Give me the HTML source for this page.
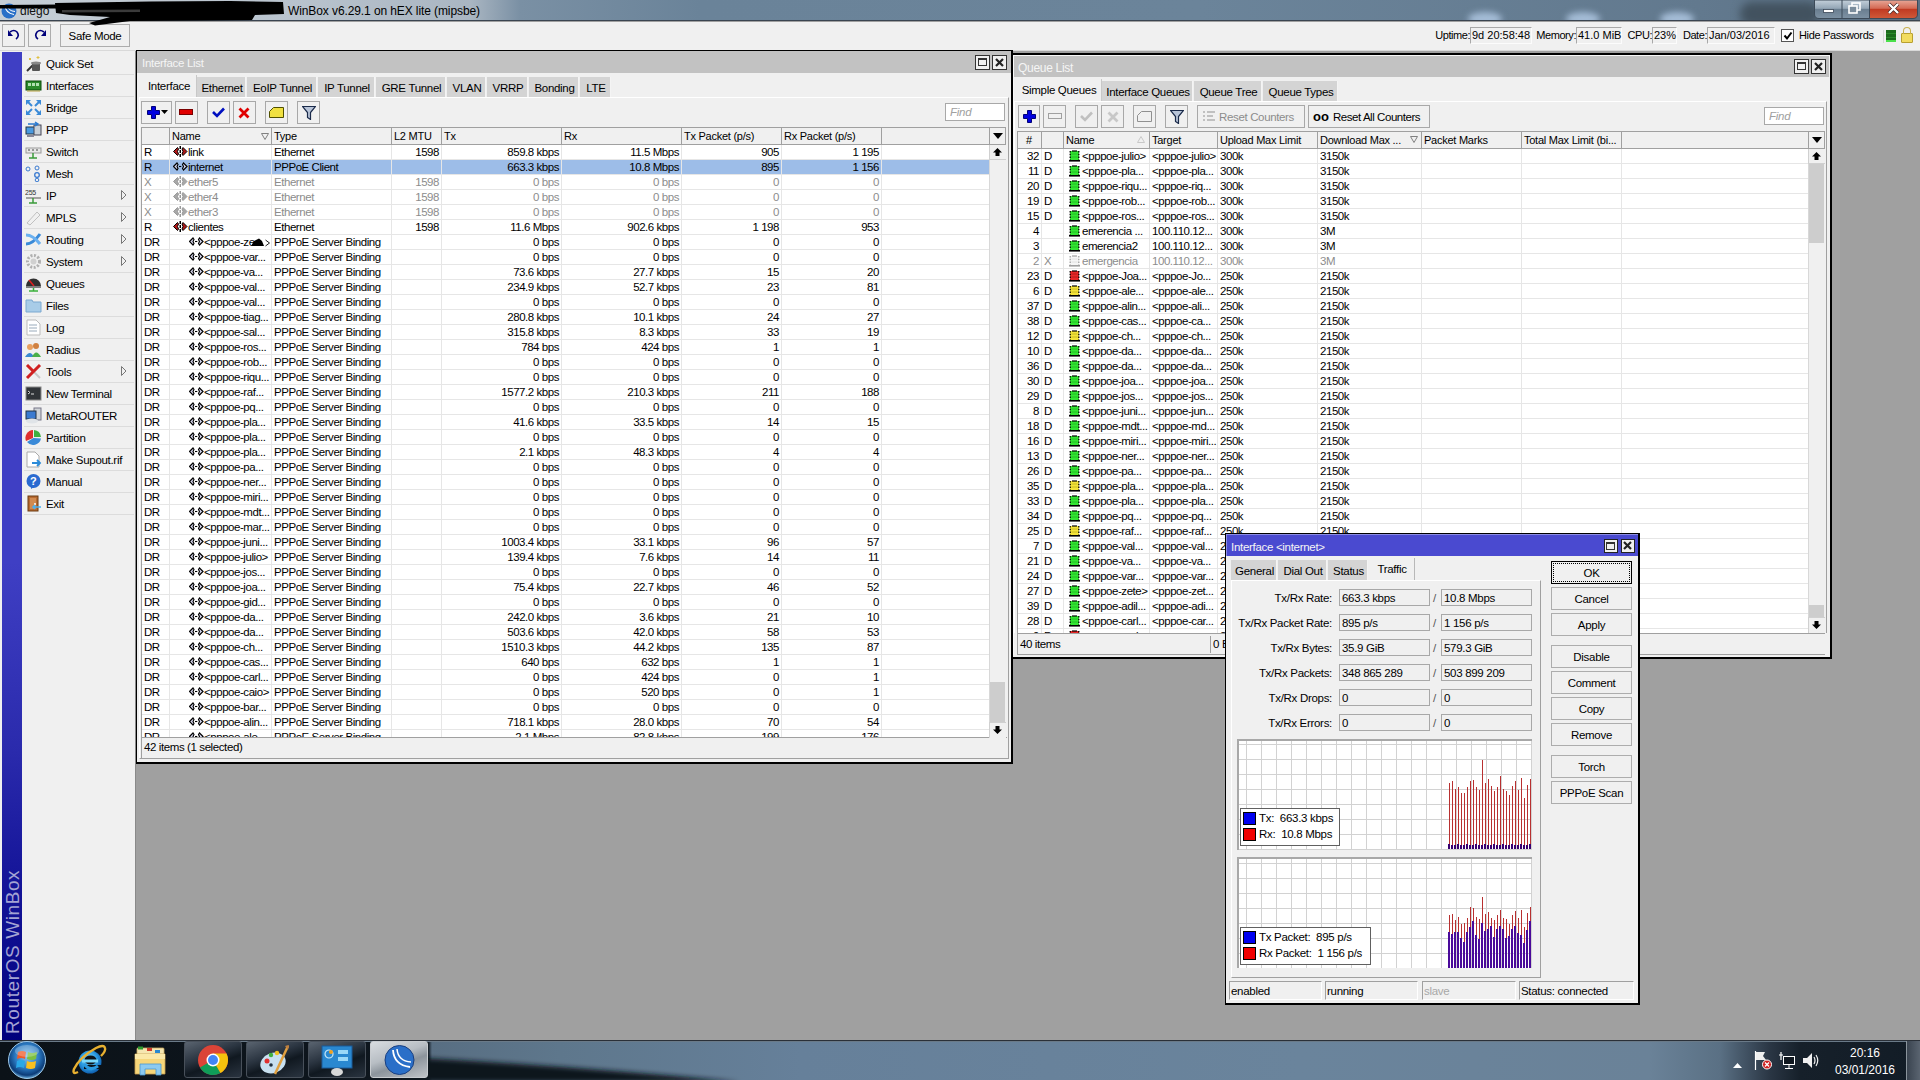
<!DOCTYPE html><html><head><meta charset="utf-8"><style>
*{box-sizing:border-box}
html,body{margin:0;padding:0;width:1920px;height:1080px;overflow:hidden;background:#a0a0a0}
body{position:relative;font-family:"Liberation Sans",sans-serif;font-size:11px;color:#000;letter-spacing:-0.25px}
div{position:absolute}
.t{white-space:pre;line-height:15px;height:15px}
.r{text-align:right}
.btn{background:#f0f0f0;border:1px solid #adadad}
.g{color:#8c8c8c}
.tb .t{font-size:11.5px;letter-spacing:-0.45px}
</style></head><body>
<div style="left:0px;top:0px;width:1920px;height:21px;background:linear-gradient(90deg,#c6ced6 0px,#bcc6d0 250px,#aab6c2 470px,#7a90a4 520px,#6a8399 700px,#6b849a 1200px,#62798e 1700px,#5a7084 1920px)"></div>
<div style="position:absolute;left:0;top:0;width:1920px;height:20px;overflow:hidden"><div style="position:absolute;left:1468px;top:12px;width:34px;height:14px;border-radius:50%;background:#a4bcd6;filter:blur(3px)"></div><div style="position:absolute;left:1566px;top:12px;width:34px;height:14px;border-radius:50%;background:#a4bcd6;filter:blur(3px)"></div><div style="position:absolute;left:1660px;top:12px;width:34px;height:14px;border-radius:50%;background:#a4bcd6;filter:blur(3px)"></div><div style="position:absolute;left:1740px;top:2px;width:80px;height:24px;border-radius:12px;background:#42525f;filter:blur(4px)"></div></div>
<div style="left:0px;top:20px;width:1920px;height:1px;background:#3a4450"></div>
<svg style="position:absolute;left:1px;top:3px" width="16" height="16"><circle cx="8" cy="8" r="7.5" fill="#2a70c8"/><path d="M4 2.5 Q4.5 10 13 11.5" fill="none" stroke="#fff" stroke-width="1.2"/><path d="M6.5 2 Q7 8 14 8.5" fill="none" stroke="#fff" stroke-width="1"/></svg>
<div class="t" style="left:20px;top:4px;font-size:12px;color:#111;letter-spacing:0">diego</div>
<svg style="position:absolute;left:1813px;top:0" width="106" height="20"><defs><linearGradient id="cb" x1="0" y1="0" x2="0" y2="1"><stop offset="0" stop-color="#c4d0da"/><stop offset="0.45" stop-color="#94a6b6"/><stop offset="0.5" stop-color="#6a7e90"/><stop offset="1" stop-color="#7e92a4"/></linearGradient><linearGradient id="cr" x1="0" y1="0" x2="0" y2="1"><stop offset="0" stop-color="#e8a898"/><stop offset="0.45" stop-color="#d46a54"/><stop offset="0.5" stop-color="#c03a22"/><stop offset="1" stop-color="#d05a3a"/></linearGradient></defs><path d="M1.5 0 V14 Q1.5 18.5 6 18.5 H56.5 V0 Z" fill="url(#cb)" stroke="#3c4a58"/><path d="M29 0 V18.5" stroke="#3c4a58"/><path d="M56.5 0 V18.5 H100 Q104.5 18.5 104.5 14 V0 Z" fill="url(#cr)" stroke="#3c4a58"/><rect x="10.5" y="9.5" width="10" height="3" fill="#fff" stroke="#3a4656" stroke-width="0.8"/><rect x="39" y="3" width="8" height="7" fill="none" stroke="#fff" stroke-width="1.6"/><rect x="36" y="6" width="8" height="7" fill="#7a8c9c" stroke="#fff" stroke-width="1.6"/><path d="M76 4 L85 13 M85 4 L76 13" stroke="#3a2020" stroke-width="3.6"/><path d="M76 4 L85 13 M85 4 L76 13" stroke="#fff" stroke-width="2.4"/></svg>
<div style="left:0px;top:22px;width:1920px;height:29px;background:#f0f0f0"></div>
<div style="left:0px;top:50px;width:1920px;height:1px;background:#d9d9d9"></div>
<div class="btn" style="left:2px;top:24px;width:23px;height:23px;"></div>
<div class="btn" style="left:28px;top:24px;width:23px;height:23px;"></div>
<svg style="position:absolute;left:7;top:29px;left:7px" width="14" height="12"><path d="M3 3 Q7 0 10 3 Q13 7 9 10" stroke="#00007a" stroke-width="1.6" fill="none"/><path d="M1 1 L1 7 L6 7 Z" fill="#00007a"/></svg>
<svg style="position:absolute;top:29px;left:33px" width="14" height="12"><path d="M11 3 Q7 0 4 3 Q1 7 5 10" stroke="#00007a" stroke-width="1.6" fill="none"/><path d="M13 1 L13 7 L8 7 Z" fill="#00007a"/></svg>
<div class="btn" style="left:60px;top:24px;width:70px;height:23px;"></div>
<div class="t" style="left:60px;top:29px;width:70px;text-align:center;font-size:11.5px;letter-spacing:-0.3px">Safe Mode</div>
<svg style="position:absolute;left:0;top:0" width="300" height="30"><path d="M0 5 L60 4.5 L60 8.5 L0 8.5 Z" fill="#000"/><path d="M55 3 L150 1.5 L230 1 L283 2 L284 14 L255 15 L252 20 L200 20.5 L130 21 L95 25.5 L89 23 L110 17 L70 15 L56 13 Z" fill="#000"/><path d="M62 10 L140 9.5 L140 12 L62 12.5 Z" fill="#3a3a3a"/></svg>
<div class="t" style="left:279px;top:4px;font-size:12px;color:#000;letter-spacing:0">-</div>
<div class="t" style="left:288px;top:4px;font-size:12px;color:#000;letter-spacing:-0.1px">WinBox v6.29.1 on hEX lite (mipsbe)</div>
<div class="t" style="left:1390px;top:28px;width:80px;text-align:right;line-height:15px;font-size:11px;letter-spacing:-0.45px">Uptime:</div>
<div style="left:1470px;top:27px;width:62px;height:17px;background:#f0f0f0;border-left:1px solid #a8a8a8;border-top:1px solid #a8a8a8;border-right:1px solid #fcfcfc;border-bottom:1px solid #fcfcfc"></div>
<div class="t" style="left:1472px;top:28px;line-height:15px;font-size:11px;letter-spacing:0px">9d 20:58:48</div>
<div class="t" style="left:1496px;top:28px;width:80px;text-align:right;line-height:15px;font-size:11px;letter-spacing:-0.45px">Memory:</div>
<div style="left:1576px;top:27px;width:46px;height:17px;background:#f0f0f0;border-left:1px solid #a8a8a8;border-top:1px solid #a8a8a8;border-right:1px solid #fcfcfc;border-bottom:1px solid #fcfcfc"></div>
<div class="t" style="left:1578px;top:28px;line-height:15px;font-size:11px;letter-spacing:0px">41.0 MiB</div>
<div class="t" style="left:1572px;top:28px;width:80px;text-align:right;line-height:15px;font-size:11px;letter-spacing:-0.45px">CPU:</div>
<div style="left:1652px;top:27px;width:25px;height:17px;background:#f0f0f0;border-left:1px solid #a8a8a8;border-top:1px solid #a8a8a8;border-right:1px solid #fcfcfc;border-bottom:1px solid #fcfcfc"></div>
<div class="t" style="left:1654px;top:28px;line-height:15px;font-size:11px;letter-spacing:0px">23%</div>
<div class="t" style="left:1627px;top:28px;width:80px;text-align:right;line-height:15px;font-size:11px;letter-spacing:-0.45px">Date:</div>
<div style="left:1707px;top:27px;width:68px;height:17px;background:#f0f0f0;border-left:1px solid #a8a8a8;border-top:1px solid #a8a8a8;border-right:1px solid #fcfcfc;border-bottom:1px solid #fcfcfc"></div>
<div class="t" style="left:1709px;top:28px;line-height:15px;font-size:11px;letter-spacing:0px">Jan/03/2016</div>
<div style="left:1781px;top:29px;width:13px;height:13px;background:#fff;border:1px solid #555"></div>
<svg style="position:absolute;left:1782px;top:30px" width="12" height="12"><path d="M2.5 5.5 L5 8.5 L9.5 2.5" stroke="#000" stroke-width="2" fill="none"/></svg>
<div class="t" style="left:1799px;top:28px;line-height:15px;font-size:11px;letter-spacing:-0.35px">Hide Passwords</div>
<div style="left:1883px;top:30px;width:1px;height:13px;background:#d8d8d8"></div>
<div style="left:1886px;top:30px;width:10px;height:12px;background:repeating-linear-gradient(#1c6a1c 0 3px,#2a8a2a 3px 4px);border-bottom:2px solid #4be04b"></div>
<div style="left:1901px;top:33px;width:12px;height:10px;background:#f2dc60;border:1px solid #b8a030;border-radius:1px"></div>
<div style="left:1903px;top:27px;width:8px;height:7px;border:1.5px solid #c8b050;border-bottom:none;border-radius:4px 4px 0 0"></div>
<div style="left:0px;top:51px;width:136px;height:989px;background:#f0f0f0"></div>
<div style="left:2px;top:52px;width:20px;height:988px;background:linear-gradient(#3f3fc4 0px,#3f3fc4 510px,#2a2aac 700px,#16169a 820px,#0a0a8a 920px,#00007c 988px)"></div>
<div style="position:absolute;left:3px;top:1034px;width:200px;height:19px;transform:rotate(-90deg);transform-origin:0 0;color:#a4a4d4;font-size:19px;letter-spacing:0.6px;white-space:pre;line-height:19px">RouterOS WinBox</div>
<div style="left:135px;top:51px;width:1px;height:989px;background:#8a8a8a"></div>
<div style="left:24px;top:74px;width:110px;height:1px;background:#dcdcdc"></div>
<div class="t" style="left:46px;top:57px;font-size:11.5px;line-height:15px;letter-spacing:-0.3px">Quick Set</div>
<div style="left:24px;top:96px;width:110px;height:1px;background:#dcdcdc"></div>
<div class="t" style="left:46px;top:79px;font-size:11.5px;line-height:15px;letter-spacing:-0.3px">Interfaces</div>
<div style="left:24px;top:118px;width:110px;height:1px;background:#dcdcdc"></div>
<div class="t" style="left:46px;top:101px;font-size:11.5px;line-height:15px;letter-spacing:-0.3px">Bridge</div>
<div style="left:24px;top:140px;width:110px;height:1px;background:#dcdcdc"></div>
<div class="t" style="left:46px;top:123px;font-size:11.5px;line-height:15px;letter-spacing:-0.3px">PPP</div>
<div style="left:24px;top:162px;width:110px;height:1px;background:#dcdcdc"></div>
<div class="t" style="left:46px;top:145px;font-size:11.5px;line-height:15px;letter-spacing:-0.3px">Switch</div>
<div style="left:24px;top:184px;width:110px;height:1px;background:#dcdcdc"></div>
<div class="t" style="left:46px;top:167px;font-size:11.5px;line-height:15px;letter-spacing:-0.3px">Mesh</div>
<div style="left:24px;top:206px;width:110px;height:1px;background:#dcdcdc"></div>
<div class="t" style="left:46px;top:189px;font-size:11.5px;line-height:15px;letter-spacing:-0.3px">IP</div>
<svg style="position:absolute;left:121px;top:190px" width="6" height="10"><path d="M0.5 0.5 L0.5 9.5 L5 5 Z" fill="none" stroke="#777"/></svg>
<div style="left:24px;top:228px;width:110px;height:1px;background:#dcdcdc"></div>
<div class="t" style="left:46px;top:211px;font-size:11.5px;line-height:15px;letter-spacing:-0.3px">MPLS</div>
<svg style="position:absolute;left:121px;top:212px" width="6" height="10"><path d="M0.5 0.5 L0.5 9.5 L5 5 Z" fill="none" stroke="#777"/></svg>
<div style="left:24px;top:250px;width:110px;height:1px;background:#dcdcdc"></div>
<div class="t" style="left:46px;top:233px;font-size:11.5px;line-height:15px;letter-spacing:-0.3px">Routing</div>
<svg style="position:absolute;left:121px;top:234px" width="6" height="10"><path d="M0.5 0.5 L0.5 9.5 L5 5 Z" fill="none" stroke="#777"/></svg>
<div style="left:24px;top:272px;width:110px;height:1px;background:#dcdcdc"></div>
<div class="t" style="left:46px;top:255px;font-size:11.5px;line-height:15px;letter-spacing:-0.3px">System</div>
<svg style="position:absolute;left:121px;top:256px" width="6" height="10"><path d="M0.5 0.5 L0.5 9.5 L5 5 Z" fill="none" stroke="#777"/></svg>
<div style="left:24px;top:294px;width:110px;height:1px;background:#dcdcdc"></div>
<div class="t" style="left:46px;top:277px;font-size:11.5px;line-height:15px;letter-spacing:-0.3px">Queues</div>
<div style="left:24px;top:316px;width:110px;height:1px;background:#dcdcdc"></div>
<div class="t" style="left:46px;top:299px;font-size:11.5px;line-height:15px;letter-spacing:-0.3px">Files</div>
<div style="left:24px;top:338px;width:110px;height:1px;background:#dcdcdc"></div>
<div class="t" style="left:46px;top:321px;font-size:11.5px;line-height:15px;letter-spacing:-0.3px">Log</div>
<div style="left:24px;top:360px;width:110px;height:1px;background:#dcdcdc"></div>
<div class="t" style="left:46px;top:343px;font-size:11.5px;line-height:15px;letter-spacing:-0.3px">Radius</div>
<div style="left:24px;top:382px;width:110px;height:1px;background:#dcdcdc"></div>
<div class="t" style="left:46px;top:365px;font-size:11.5px;line-height:15px;letter-spacing:-0.3px">Tools</div>
<svg style="position:absolute;left:121px;top:366px" width="6" height="10"><path d="M0.5 0.5 L0.5 9.5 L5 5 Z" fill="none" stroke="#777"/></svg>
<div style="left:24px;top:404px;width:110px;height:1px;background:#dcdcdc"></div>
<div class="t" style="left:46px;top:387px;font-size:11.5px;line-height:15px;letter-spacing:-0.3px">New Terminal</div>
<div style="left:24px;top:426px;width:110px;height:1px;background:#dcdcdc"></div>
<div class="t" style="left:46px;top:409px;font-size:11.5px;line-height:15px;letter-spacing:-0.3px">MetaROUTER</div>
<div style="left:24px;top:448px;width:110px;height:1px;background:#dcdcdc"></div>
<div class="t" style="left:46px;top:431px;font-size:11.5px;line-height:15px;letter-spacing:-0.3px">Partition</div>
<div style="left:24px;top:470px;width:110px;height:1px;background:#dcdcdc"></div>
<div class="t" style="left:46px;top:453px;font-size:11.5px;line-height:15px;letter-spacing:-0.3px">Make Supout.rif</div>
<div style="left:24px;top:492px;width:110px;height:1px;background:#dcdcdc"></div>
<div class="t" style="left:46px;top:475px;font-size:11.5px;line-height:15px;letter-spacing:-0.3px">Manual</div>
<div style="left:24px;top:514px;width:110px;height:1px;background:#dcdcdc"></div>
<div class="t" style="left:46px;top:497px;font-size:11.5px;line-height:15px;letter-spacing:-0.3px">Exit</div>
<svg style="position:absolute;left:25px;top:55px" width="17" height="17"><path d="M2 16 L10 8" stroke="#333" stroke-width="2"/><rect x="7" y="8" width="8" height="8" rx="1" fill="#555"/><ellipse cx="11" cy="8" rx="5" ry="1.5" fill="#888"/><path d="M4 3 L6 5 M6 3 L4 5 M13 1 L13 4 M11.5 2.5 H14.5" stroke="#e0c040" stroke-width="1"/></svg>
<svg style="position:absolute;left:25px;top:77px" width="17" height="17"><rect x="1" y="4" width="15" height="9" fill="#2a8a2a" stroke="#0a4a0a"/><rect x="3" y="6" width="3" height="3" fill="#b0e0b0"/><rect x="7" y="6" width="3" height="3" fill="#b0e0b0"/><rect x="11" y="6" width="3" height="3" fill="#b0e0b0"/><path d="M2 14 H15" stroke="#b8a040"/></svg>
<svg style="position:absolute;left:25px;top:99px" width="17" height="17"><path d="M1 1 L6 1 L1 6 Z M16 1 L11 1 L16 6 Z M1 16 L6 16 L1 11 Z M16 16 L11 16 L16 11 Z" fill="#3a8ad8"/><path d="M3 3 L7 7 M14 3 L10 7 M3 14 L7 10 M14 14 L10 10" stroke="#3a8ad8" stroke-width="2"/></svg>
<svg style="position:absolute;left:25px;top:121px" width="17" height="17"><rect x="1" y="6" width="9" height="7" fill="#4a9ae0" stroke="#234"/><rect x="9" y="4" width="7" height="10" fill="#c8d0d8" stroke="#445"/><path d="M3 3 H12 M10 1 L13 3 L10 5" stroke="#2a7ad0" stroke-width="1.5" fill="none"/><rect x="2" y="14" width="7" height="2" fill="#889"/></svg>
<svg style="position:absolute;left:25px;top:143px" width="17" height="17"><rect x="1" y="5" width="15" height="5" fill="#e8e8e8" stroke="#999"/><path d="M3 7 H5 M7 7 H9 M11 7 H13" stroke="#444"/><path d="M8 10 V15 M4 15 H12" stroke="#3a9a3a" stroke-width="1.5"/></svg>
<svg style="position:absolute;left:25px;top:165px" width="17" height="17"><circle cx="3" cy="4" r="2" fill="none" stroke="#3a7ad0"/><circle cx="12" cy="3" r="2" fill="none" stroke="#3a7ad0"/><circle cx="12" cy="10" r="2.3" fill="none" stroke="#3a7ad0" stroke-width="1.3"/><circle cx="12" cy="15" r="1.8" fill="none" stroke="#3a7ad0"/></svg>
<svg style="position:absolute;left:25px;top:187px" width="17" height="17"><text x="0" y="8" font-size="7" font-family="Liberation Sans" fill="#333">255</text><path d="M1 11 H16" stroke="#555"/><path d="M8 11 V16 M4 16 H12" stroke="#3a9a3a" stroke-width="1.5"/></svg>
<svg style="position:absolute;left:25px;top:209px" width="17" height="17"><path d="M2 14 L12 3 L15 6 L5 16 Z" fill="#f0f0f0" stroke="#c0c0c0"/></svg>
<svg style="position:absolute;left:25px;top:231px" width="17" height="17"><path d="M1 13 Q8 13 15 3" stroke="#3a8ad8" stroke-width="3" fill="none"/><path d="M1 4 Q8 4 15 13" stroke="#6ab0f0" stroke-width="3" fill="none"/></svg>
<svg style="position:absolute;left:25px;top:253px" width="17" height="17"><circle cx="8.5" cy="8.5" r="6" fill="none" stroke="#b0b0b0" stroke-width="3" stroke-dasharray="2 1.5"/><circle cx="8.5" cy="8.5" r="3" fill="#d0d0d0"/></svg>
<svg style="position:absolute;left:25px;top:275px" width="17" height="17"><path d="M1 11 A7.5 7.5 0 0 1 16 11 Z" fill="#303030"/><path d="M4 5 L9 11" stroke="#e02020" stroke-width="1.5"/><path d="M8.5 11 V16 M4 16 H13" stroke="#3ab03a" stroke-width="1.5"/><rect x="1" y="11" width="15" height="2" fill="#808080"/></svg>
<svg style="position:absolute;left:25px;top:297px" width="17" height="17"><path d="M1 3 H7 L8 5 H16 V15 H1 Z" fill="#a8cce8" stroke="#7aa8d0"/></svg>
<svg style="position:absolute;left:25px;top:319px" width="17" height="17"><path d="M2 1 H11 L15 5 V16 H2 Z" fill="#fff" stroke="#bbb"/><path d="M4 6 H12 M4 9 H12 M4 12 H12" stroke="#9ab"/></svg>
<svg style="position:absolute;left:25px;top:341px" width="17" height="17"><circle cx="5" cy="6" r="3" fill="#e8a060"/><circle cx="11" cy="5" r="3" fill="#d08040"/><path d="M0 16 Q5 8 9 16 Z" fill="#3a8ad0"/><path d="M7 16 Q11 7 16 16 Z" fill="#4ab04a"/></svg>
<svg style="position:absolute;left:25px;top:363px" width="17" height="17"><path d="M2 2 L15 15" stroke="#c8c8c8" stroke-width="2"/><path d="M15 2 L2 15" stroke="#d02020" stroke-width="3"/><path d="M2 2 L8 8" stroke="#d02020" stroke-width="3"/></svg>
<svg style="position:absolute;left:25px;top:385px" width="17" height="17"><rect x="1" y="2" width="15" height="13" fill="#303438" stroke="#888"/><path d="M3 6 L5 7.5 L3 9 M6 9 H9" stroke="#ddd"/></svg>
<svg style="position:absolute;left:25px;top:407px" width="17" height="17"><rect x="9" y="1" width="7" height="12" fill="#d0d4d8" stroke="#778"/><rect x="1" y="4" width="10" height="8" fill="#3a7ad0" stroke="#234"/><ellipse cx="7" cy="14" rx="6" ry="2.5" fill="#e0e4e8"/></svg>
<svg style="position:absolute;left:25px;top:429px" width="17" height="17"><path d="M8 9 L8 1 A8 8 0 0 0 1 12 Z" fill="#e03030"/><path d="M9 8 L9 1 A8 8 0 0 1 16 8 Z" fill="#40b040"/><path d="M8.5 9 L16 9.5 A8 8 0 0 1 2 13 Z" fill="#3a8ad8"/></svg>
<svg style="position:absolute;left:25px;top:451px" width="17" height="17"><path d="M2 1 H10 L14 5 V16 H2 Z" fill="#fff" stroke="#aaa"/><path d="M7 12 H15 M12 9 L15 12 L12 15" stroke="#2a8ad8" stroke-width="1.8" fill="none"/></svg>
<svg style="position:absolute;left:25px;top:473px" width="17" height="17"><circle cx="8.5" cy="8" r="7" fill="#2a6ad0"/><path d="M6 16 L9 14 L6 13 Z" fill="#2a6ad0"/><text x="5" y="12" font-size="11" font-weight="bold" font-family="Liberation Sans" fill="#fff">?</text></svg>
<svg style="position:absolute;left:25px;top:495px" width="17" height="17"><rect x="3" y="1" width="10" height="15" fill="#b86a30" stroke="#6a3a10"/><rect x="5" y="3" width="6" height="11" fill="#d08a50"/><circle cx="10" cy="9" r="1" fill="#fff"/><path d="M8 12 H16 M10 10 L8 12 L10 14" stroke="#4ab0f0" stroke-width="1.5" fill="none"/></svg>
<div style="left:136px;top:51px;width:1784px;height:989px;background:#a0a0a0"></div>
<div style="left:136px;top:50px;width:877px;height:714px;background:#f0f0f0;border:1px solid #000;border-right-width:2px;border-bottom-width:2px"></div>
<div style="left:137px;top:51px;width:874px;height:22px;background:#c2c2c2"></div>
<div class="t" style="left:142px;top:56px;color:#f5f5f5;font-size:11.5px;letter-spacing:-0.3px">Interface List</div>
<div style="left:975px;top:55px;width:15px;height:15px;background:#f0f0f0;border:1px solid #333"></div>
<div style="left:978px;top:58px;width:9px;height:8px;border:1px solid #333;border-top-width:2px"></div>
<div style="left:992px;top:55px;width:15px;height:15px;background:#f0f0f0;border:1px solid #333"></div>
<svg style="position:absolute;left:995px;top:58px" width="9" height="9" viewBox="0 0 9 9"><path d="M1 1 L8 8 M8 1 L1 8" stroke="#222" stroke-width="2.2"/></svg>
<div style="left:139px;top:97px;width:870px;height:662px;border-top:1px solid #fff;border-left:1px solid #fff;border-right:1px solid #a0a0a0;border-bottom:1px solid #a0a0a0"></div>
<div style="left:141px;top:75px;width:56px;height:22px;background:#f0f0f0;border-right:1px solid #c8c8c8"></div>
<div class="t" style="left:141px;top:79px;width:56px;text-align:center;font-size:11.5px;letter-spacing:-0.3px">Interface</div>
<div style="left:197px;top:77px;width:49px;height:20px;background:#d4d4d4;border-right:1px solid #f4f4f4"></div>
<div class="t" style="left:197px;top:81px;width:50px;text-align:center;font-size:11.5px;letter-spacing:-0.3px">Ethernet</div>
<div style="left:247px;top:77px;width:70px;height:20px;background:#d4d4d4;border-right:1px solid #f4f4f4"></div>
<div class="t" style="left:247px;top:81px;width:71px;text-align:center;font-size:11.5px;letter-spacing:-0.3px">EoIP Tunnel</div>
<div style="left:318px;top:77px;width:57px;height:20px;background:#d4d4d4;border-right:1px solid #f4f4f4"></div>
<div class="t" style="left:318px;top:81px;width:58px;text-align:center;font-size:11.5px;letter-spacing:-0.3px">IP Tunnel</div>
<div style="left:376px;top:77px;width:70px;height:20px;background:#d4d4d4;border-right:1px solid #f4f4f4"></div>
<div class="t" style="left:376px;top:81px;width:71px;text-align:center;font-size:11.5px;letter-spacing:-0.3px">GRE Tunnel</div>
<div style="left:447px;top:77px;width:39px;height:20px;background:#d4d4d4;border-right:1px solid #f4f4f4"></div>
<div class="t" style="left:447px;top:81px;width:40px;text-align:center;font-size:11.5px;letter-spacing:-0.3px">VLAN</div>
<div style="left:487px;top:77px;width:41px;height:20px;background:#d4d4d4;border-right:1px solid #f4f4f4"></div>
<div class="t" style="left:487px;top:81px;width:42px;text-align:center;font-size:11.5px;letter-spacing:-0.3px">VRRP</div>
<div style="left:529px;top:77px;width:50px;height:20px;background:#d4d4d4;border-right:1px solid #f4f4f4"></div>
<div class="t" style="left:529px;top:81px;width:51px;text-align:center;font-size:11.5px;letter-spacing:-0.3px">Bonding</div>
<div style="left:580px;top:77px;width:31px;height:20px;background:#d4d4d4;border-right:1px solid #f4f4f4"></div>
<div class="t" style="left:580px;top:81px;width:32px;text-align:center;font-size:11.5px;letter-spacing:-0.3px">LTE</div>
<div style="left:141px;top:101px;width:31px;height:23px;background:#f0f0f0;border:1px solid #a8a8a8;"></div>
<svg style="position:absolute;left:147px;top:106px" width="13" height="13"><path d="M4.5 0.5h4v4h4v4h-4v4h-4v-4h-4v-4h4z" fill="#0000e0" stroke="#00007a" stroke-width="1"/></svg><svg style="position:absolute;left:161px;top:110px" width="7" height="4"><path d="M0 0h7L3.5 4z" fill="#000"/></svg>
<div style="left:175px;top:101px;width:23px;height:23px;background:#f0f0f0;border:1px solid #a8a8a8;"></div>
<svg style="position:absolute;left:179px;top:109px" width="14" height="6"><rect x="0.5" y="0.5" width="13" height="5" fill="#e00000" stroke="#7a0000"/></svg>
<div style="left:207px;top:101px;width:23px;height:23px;background:#f0f0f0;border:1px solid #a8a8a8;"></div>
<svg style="position:absolute;left:212px;top:107px" width="13" height="11"><path d="M1 5 L5 9 L12 1.5" stroke="#0010c0" stroke-width="2.6" fill="none"/></svg>
<div style="left:233px;top:101px;width:23px;height:23px;background:#f0f0f0;border:1px solid #a8a8a8;"></div>
<svg style="position:absolute;left:238px;top:107px" width="12" height="12"><path d="M1.5 1.5 L10.5 10.5 M10.5 1.5 L1.5 10.5" stroke="#e00000" stroke-width="2.8"/></svg>
<div style="left:265px;top:101px;width:23px;height:23px;background:#f0f0f0;border:1px solid #a8a8a8;"></div>
<svg style="position:absolute;left:269px;top:107px" width="15" height="11"><path d="M0.5 4.5 L4.5 0.5 H14.5 V10.5 H0.5 Z" fill="#f0e040" stroke="#505000"/></svg>
<div style="left:297px;top:101px;width:23px;height:23px;background:#f0f0f0;border:1px solid #a8a8a8;"></div>
<svg style="position:absolute;left:302px;top:106px" width="14" height="14"><path d="M0.5 0.5 H13.5 L8.5 6.5 V13.5 L5.5 11.5 V6.5 Z" fill="#b8c4d8" stroke="#1a2a4a" stroke-width="1.2"/></svg>
<div style="left:945px;top:103px;width:60px;height:18px;background:#fff;border:1px solid #a8a8a8"></div>
<div class="t" style="left:950px;top:105px;color:#a0a0a0;font-style:italic;font-size:11.5px">Find</div>
<div style="left:141px;top:127px;width:848px;height:611px;background:#fff;border-left:1px solid #a0a0a0"></div>
<div style="left:141px;top:127px;width:848px;height:18px;background:#f0f0f0;border-top:1px solid #a0a0a0;border-bottom:1px solid #a0a0a0;border-left:1px solid #a0a0a0"></div>
<div class="tb" style="left:141px;top:145px;width:848px;height:592px;overflow:hidden"><div style="left:0;top:14px;width:848px;height:1px;background:#e6e6e6"></div><div style="left:0;top:15px;width:848px;height:14px;background:#9dbde8"></div><div style="left:0;top:29px;width:848px;height:1px;background:#e6e6e6"></div><div style="left:0;top:44px;width:848px;height:1px;background:#e6e6e6"></div><div style="left:0;top:59px;width:848px;height:1px;background:#e6e6e6"></div><div style="left:0;top:74px;width:848px;height:1px;background:#e6e6e6"></div><div style="left:0;top:89px;width:848px;height:1px;background:#e6e6e6"></div><div style="left:0;top:104px;width:848px;height:1px;background:#e6e6e6"></div><div style="left:0;top:119px;width:848px;height:1px;background:#e6e6e6"></div><div style="left:0;top:134px;width:848px;height:1px;background:#e6e6e6"></div><div style="left:0;top:149px;width:848px;height:1px;background:#e6e6e6"></div><div style="left:0;top:164px;width:848px;height:1px;background:#e6e6e6"></div><div style="left:0;top:179px;width:848px;height:1px;background:#e6e6e6"></div><div style="left:0;top:194px;width:848px;height:1px;background:#e6e6e6"></div><div style="left:0;top:209px;width:848px;height:1px;background:#e6e6e6"></div><div style="left:0;top:224px;width:848px;height:1px;background:#e6e6e6"></div><div style="left:0;top:239px;width:848px;height:1px;background:#e6e6e6"></div><div style="left:0;top:254px;width:848px;height:1px;background:#e6e6e6"></div><div style="left:0;top:269px;width:848px;height:1px;background:#e6e6e6"></div><div style="left:0;top:284px;width:848px;height:1px;background:#e6e6e6"></div><div style="left:0;top:299px;width:848px;height:1px;background:#e6e6e6"></div><div style="left:0;top:314px;width:848px;height:1px;background:#e6e6e6"></div><div style="left:0;top:329px;width:848px;height:1px;background:#e6e6e6"></div><div style="left:0;top:344px;width:848px;height:1px;background:#e6e6e6"></div><div style="left:0;top:359px;width:848px;height:1px;background:#e6e6e6"></div><div style="left:0;top:374px;width:848px;height:1px;background:#e6e6e6"></div><div style="left:0;top:389px;width:848px;height:1px;background:#e6e6e6"></div><div style="left:0;top:404px;width:848px;height:1px;background:#e6e6e6"></div><div style="left:0;top:419px;width:848px;height:1px;background:#e6e6e6"></div><div style="left:0;top:434px;width:848px;height:1px;background:#e6e6e6"></div><div style="left:0;top:449px;width:848px;height:1px;background:#e6e6e6"></div><div style="left:0;top:464px;width:848px;height:1px;background:#e6e6e6"></div><div style="left:0;top:479px;width:848px;height:1px;background:#e6e6e6"></div><div style="left:0;top:494px;width:848px;height:1px;background:#e6e6e6"></div><div style="left:0;top:509px;width:848px;height:1px;background:#e6e6e6"></div><div style="left:0;top:524px;width:848px;height:1px;background:#e6e6e6"></div><div style="left:0;top:539px;width:848px;height:1px;background:#e6e6e6"></div><div style="left:0;top:554px;width:848px;height:1px;background:#e6e6e6"></div><div style="left:0;top:569px;width:848px;height:1px;background:#e6e6e6"></div><div style="left:0;top:584px;width:848px;height:1px;background:#e6e6e6"></div><div style="left:0;top:599px;width:848px;height:1px;background:#e6e6e6"></div><div style="left:28px;top:0;width:1px;height:600px;background:#e6e6e6"></div><div style="left:130px;top:0;width:1px;height:600px;background:#e6e6e6"></div><div style="left:250px;top:0;width:1px;height:600px;background:#e6e6e6"></div><div style="left:300px;top:0;width:1px;height:600px;background:#e6e6e6"></div><div style="left:420px;top:0;width:1px;height:600px;background:#e6e6e6"></div><div style="left:540px;top:0;width:1px;height:600px;background:#e6e6e6"></div><div style="left:640px;top:0;width:1px;height:600px;background:#e6e6e6"></div><div style="left:740px;top:0;width:1px;height:600px;background:#e6e6e6"></div><div class="t" style="left:3px;top:0px;">R</div>
<svg style="position:absolute;left:32px;top:1px" width="15" height="12"><path d="M0.5 5.5 L4.5 1.5 L5.5 3 L4.5 5.5 L5.5 8 L4.5 9.5 Z" fill="#b01818" stroke="#000" stroke-width="1"/><path d="M14 5.5 L10 1.5 L9 3 L10 5.5 L9 8 L10 9.5 Z" fill="#b01818" stroke="#000" stroke-width="1"/><path d="M7.25 0 V12" stroke="#000" stroke-width="1.5" stroke-dasharray="3 1"/></svg>
<div class="t" style="left:47px;top:0px;">link</div>
<div class="t" style="left:133px;top:0px;">Ethernet</div>
<div class="t r" style="left:98px;top:0px;width:200px;">1598</div>
<div class="t r" style="left:218px;top:0px;width:200px;">859.8 kbps</div>
<div class="t r" style="left:338px;top:0px;width:200px;">11.5 Mbps</div>
<div class="t r" style="left:438px;top:0px;width:200px;">905</div>
<div class="t r" style="left:538px;top:0px;width:200px;">1 195</div>
<div class="t" style="left:3px;top:15px;">R</div>
<svg style="position:absolute;left:32px;top:17px" width="15" height="10"><path d="M0.5 4.5 L4 1 L5 2.5 L4 4.5 L5 6.5 L4 8 Z" fill="#d8d8f0" stroke="#000" stroke-width="1.15" stroke-linejoin="miter"/><path d="M14 4.5 L10.5 1 L9.5 2.5 L10.5 4.5 L9.5 6.5 L10.5 8 Z" fill="#d8d8f0" stroke="#000" stroke-width="1.15"/><path d="M6 4.5 H8.3" stroke="#000" stroke-width="1.1"/></svg>
<div class="t" style="left:47px;top:15px;">internet</div>
<div class="t" style="left:133px;top:15px;">PPPoE Client</div>
<div class="t r" style="left:98px;top:15px;width:200px;"></div>
<div class="t r" style="left:218px;top:15px;width:200px;">663.3 kbps</div>
<div class="t r" style="left:338px;top:15px;width:200px;">10.8 Mbps</div>
<div class="t r" style="left:438px;top:15px;width:200px;">895</div>
<div class="t r" style="left:538px;top:15px;width:200px;">1 156</div>
<div class="t" style="left:3px;top:30px;color:#8c8c8c;">X</div>
<svg style="position:absolute;left:32px;top:31px" width="15" height="12"><path d="M0.5 5.5 L4.5 1.5 L5.5 3 L4.5 5.5 L5.5 8 L4.5 9.5 Z" fill="#a8a8a8" stroke="#9a9a9a" stroke-width="1"/><path d="M14 5.5 L10 1.5 L9 3 L10 5.5 L9 8 L10 9.5 Z" fill="#a8a8a8" stroke="#9a9a9a" stroke-width="1"/><path d="M7.25 0 V12" stroke="#9a9a9a" stroke-width="1.5" stroke-dasharray="3 1"/></svg>
<div class="t" style="left:47px;top:30px;color:#8c8c8c;">ether5</div>
<div class="t" style="left:133px;top:30px;color:#8c8c8c;">Ethernet</div>
<div class="t r" style="left:98px;top:30px;width:200px;color:#8c8c8c;">1598</div>
<div class="t r" style="left:218px;top:30px;width:200px;color:#8c8c8c;">0 bps</div>
<div class="t r" style="left:338px;top:30px;width:200px;color:#8c8c8c;">0 bps</div>
<div class="t r" style="left:438px;top:30px;width:200px;color:#8c8c8c;">0</div>
<div class="t r" style="left:538px;top:30px;width:200px;color:#8c8c8c;">0</div>
<div class="t" style="left:3px;top:45px;color:#8c8c8c;">X</div>
<svg style="position:absolute;left:32px;top:46px" width="15" height="12"><path d="M0.5 5.5 L4.5 1.5 L5.5 3 L4.5 5.5 L5.5 8 L4.5 9.5 Z" fill="#a8a8a8" stroke="#9a9a9a" stroke-width="1"/><path d="M14 5.5 L10 1.5 L9 3 L10 5.5 L9 8 L10 9.5 Z" fill="#a8a8a8" stroke="#9a9a9a" stroke-width="1"/><path d="M7.25 0 V12" stroke="#9a9a9a" stroke-width="1.5" stroke-dasharray="3 1"/></svg>
<div class="t" style="left:47px;top:45px;color:#8c8c8c;">ether4</div>
<div class="t" style="left:133px;top:45px;color:#8c8c8c;">Ethernet</div>
<div class="t r" style="left:98px;top:45px;width:200px;color:#8c8c8c;">1598</div>
<div class="t r" style="left:218px;top:45px;width:200px;color:#8c8c8c;">0 bps</div>
<div class="t r" style="left:338px;top:45px;width:200px;color:#8c8c8c;">0 bps</div>
<div class="t r" style="left:438px;top:45px;width:200px;color:#8c8c8c;">0</div>
<div class="t r" style="left:538px;top:45px;width:200px;color:#8c8c8c;">0</div>
<div class="t" style="left:3px;top:60px;color:#8c8c8c;">X</div>
<svg style="position:absolute;left:32px;top:61px" width="15" height="12"><path d="M0.5 5.5 L4.5 1.5 L5.5 3 L4.5 5.5 L5.5 8 L4.5 9.5 Z" fill="#a8a8a8" stroke="#9a9a9a" stroke-width="1"/><path d="M14 5.5 L10 1.5 L9 3 L10 5.5 L9 8 L10 9.5 Z" fill="#a8a8a8" stroke="#9a9a9a" stroke-width="1"/><path d="M7.25 0 V12" stroke="#9a9a9a" stroke-width="1.5" stroke-dasharray="3 1"/></svg>
<div class="t" style="left:47px;top:60px;color:#8c8c8c;">ether3</div>
<div class="t" style="left:133px;top:60px;color:#8c8c8c;">Ethernet</div>
<div class="t r" style="left:98px;top:60px;width:200px;color:#8c8c8c;">1598</div>
<div class="t r" style="left:218px;top:60px;width:200px;color:#8c8c8c;">0 bps</div>
<div class="t r" style="left:338px;top:60px;width:200px;color:#8c8c8c;">0 bps</div>
<div class="t r" style="left:438px;top:60px;width:200px;color:#8c8c8c;">0</div>
<div class="t r" style="left:538px;top:60px;width:200px;color:#8c8c8c;">0</div>
<div class="t" style="left:3px;top:75px;">R</div>
<svg style="position:absolute;left:32px;top:76px" width="15" height="12"><path d="M0.5 5.5 L4.5 1.5 L5.5 3 L4.5 5.5 L5.5 8 L4.5 9.5 Z" fill="#b01818" stroke="#000" stroke-width="1"/><path d="M14 5.5 L10 1.5 L9 3 L10 5.5 L9 8 L10 9.5 Z" fill="#b01818" stroke="#000" stroke-width="1"/><path d="M7.25 0 V12" stroke="#000" stroke-width="1.5" stroke-dasharray="3 1"/></svg>
<div class="t" style="left:47px;top:75px;">clientes</div>
<div class="t" style="left:133px;top:75px;">Ethernet</div>
<div class="t r" style="left:98px;top:75px;width:200px;">1598</div>
<div class="t r" style="left:218px;top:75px;width:200px;">11.6 Mbps</div>
<div class="t r" style="left:338px;top:75px;width:200px;">902.6 kbps</div>
<div class="t r" style="left:438px;top:75px;width:200px;">1 198</div>
<div class="t r" style="left:538px;top:75px;width:200px;">953</div>
<div class="t" style="left:3px;top:90px;">DR</div>
<svg style="position:absolute;left:48px;top:92px" width="15" height="10"><path d="M0.5 4.5 L4 1 L5 2.5 L4 4.5 L5 6.5 L4 8 Z" fill="#d8d8f0" stroke="#000" stroke-width="1.15" stroke-linejoin="miter"/><path d="M14 4.5 L10.5 1 L9.5 2.5 L10.5 4.5 L9.5 6.5 L10.5 8 Z" fill="#d8d8f0" stroke="#000" stroke-width="1.15"/><path d="M6 4.5 H8.3" stroke="#000" stroke-width="1.1"/></svg>
<div class="t" style="left:63px;top:90px;">&lt;pppoe-ze</div>
<svg style="position:absolute;left:110px;top:92px" width="20" height="10"><path d="M0 9 L3 4 L8 1.5 L11 4 L13 9 Z" fill="#000"/><path d="M14.5 3 L18.5 6 L14.5 9" fill="none" stroke="#222" stroke-width="1"/></svg>
<div class="t" style="left:133px;top:90px;">PPPoE Server Binding</div>
<div class="t r" style="left:98px;top:90px;width:200px;"></div>
<div class="t r" style="left:218px;top:90px;width:200px;">0 bps</div>
<div class="t r" style="left:338px;top:90px;width:200px;">0 bps</div>
<div class="t r" style="left:438px;top:90px;width:200px;">0</div>
<div class="t r" style="left:538px;top:90px;width:200px;">0</div>
<div class="t" style="left:3px;top:105px;">DR</div>
<svg style="position:absolute;left:48px;top:107px" width="15" height="10"><path d="M0.5 4.5 L4 1 L5 2.5 L4 4.5 L5 6.5 L4 8 Z" fill="#d8d8f0" stroke="#000" stroke-width="1.15" stroke-linejoin="miter"/><path d="M14 4.5 L10.5 1 L9.5 2.5 L10.5 4.5 L9.5 6.5 L10.5 8 Z" fill="#d8d8f0" stroke="#000" stroke-width="1.15"/><path d="M6 4.5 H8.3" stroke="#000" stroke-width="1.1"/></svg>
<div class="t" style="left:63px;top:105px;">&lt;pppoe-var...</div>
<div class="t" style="left:133px;top:105px;">PPPoE Server Binding</div>
<div class="t r" style="left:98px;top:105px;width:200px;"></div>
<div class="t r" style="left:218px;top:105px;width:200px;">0 bps</div>
<div class="t r" style="left:338px;top:105px;width:200px;">0 bps</div>
<div class="t r" style="left:438px;top:105px;width:200px;">0</div>
<div class="t r" style="left:538px;top:105px;width:200px;">0</div>
<div class="t" style="left:3px;top:120px;">DR</div>
<svg style="position:absolute;left:48px;top:122px" width="15" height="10"><path d="M0.5 4.5 L4 1 L5 2.5 L4 4.5 L5 6.5 L4 8 Z" fill="#d8d8f0" stroke="#000" stroke-width="1.15" stroke-linejoin="miter"/><path d="M14 4.5 L10.5 1 L9.5 2.5 L10.5 4.5 L9.5 6.5 L10.5 8 Z" fill="#d8d8f0" stroke="#000" stroke-width="1.15"/><path d="M6 4.5 H8.3" stroke="#000" stroke-width="1.1"/></svg>
<div class="t" style="left:63px;top:120px;">&lt;pppoe-va...</div>
<div class="t" style="left:133px;top:120px;">PPPoE Server Binding</div>
<div class="t r" style="left:98px;top:120px;width:200px;"></div>
<div class="t r" style="left:218px;top:120px;width:200px;">73.6 kbps</div>
<div class="t r" style="left:338px;top:120px;width:200px;">27.7 kbps</div>
<div class="t r" style="left:438px;top:120px;width:200px;">15</div>
<div class="t r" style="left:538px;top:120px;width:200px;">20</div>
<div class="t" style="left:3px;top:135px;">DR</div>
<svg style="position:absolute;left:48px;top:137px" width="15" height="10"><path d="M0.5 4.5 L4 1 L5 2.5 L4 4.5 L5 6.5 L4 8 Z" fill="#d8d8f0" stroke="#000" stroke-width="1.15" stroke-linejoin="miter"/><path d="M14 4.5 L10.5 1 L9.5 2.5 L10.5 4.5 L9.5 6.5 L10.5 8 Z" fill="#d8d8f0" stroke="#000" stroke-width="1.15"/><path d="M6 4.5 H8.3" stroke="#000" stroke-width="1.1"/></svg>
<div class="t" style="left:63px;top:135px;">&lt;pppoe-val...</div>
<div class="t" style="left:133px;top:135px;">PPPoE Server Binding</div>
<div class="t r" style="left:98px;top:135px;width:200px;"></div>
<div class="t r" style="left:218px;top:135px;width:200px;">234.9 kbps</div>
<div class="t r" style="left:338px;top:135px;width:200px;">52.7 kbps</div>
<div class="t r" style="left:438px;top:135px;width:200px;">23</div>
<div class="t r" style="left:538px;top:135px;width:200px;">81</div>
<div class="t" style="left:3px;top:150px;">DR</div>
<svg style="position:absolute;left:48px;top:152px" width="15" height="10"><path d="M0.5 4.5 L4 1 L5 2.5 L4 4.5 L5 6.5 L4 8 Z" fill="#d8d8f0" stroke="#000" stroke-width="1.15" stroke-linejoin="miter"/><path d="M14 4.5 L10.5 1 L9.5 2.5 L10.5 4.5 L9.5 6.5 L10.5 8 Z" fill="#d8d8f0" stroke="#000" stroke-width="1.15"/><path d="M6 4.5 H8.3" stroke="#000" stroke-width="1.1"/></svg>
<div class="t" style="left:63px;top:150px;">&lt;pppoe-val...</div>
<div class="t" style="left:133px;top:150px;">PPPoE Server Binding</div>
<div class="t r" style="left:98px;top:150px;width:200px;"></div>
<div class="t r" style="left:218px;top:150px;width:200px;">0 bps</div>
<div class="t r" style="left:338px;top:150px;width:200px;">0 bps</div>
<div class="t r" style="left:438px;top:150px;width:200px;">0</div>
<div class="t r" style="left:538px;top:150px;width:200px;">0</div>
<div class="t" style="left:3px;top:165px;">DR</div>
<svg style="position:absolute;left:48px;top:167px" width="15" height="10"><path d="M0.5 4.5 L4 1 L5 2.5 L4 4.5 L5 6.5 L4 8 Z" fill="#d8d8f0" stroke="#000" stroke-width="1.15" stroke-linejoin="miter"/><path d="M14 4.5 L10.5 1 L9.5 2.5 L10.5 4.5 L9.5 6.5 L10.5 8 Z" fill="#d8d8f0" stroke="#000" stroke-width="1.15"/><path d="M6 4.5 H8.3" stroke="#000" stroke-width="1.1"/></svg>
<div class="t" style="left:63px;top:165px;">&lt;pppoe-tiag...</div>
<div class="t" style="left:133px;top:165px;">PPPoE Server Binding</div>
<div class="t r" style="left:98px;top:165px;width:200px;"></div>
<div class="t r" style="left:218px;top:165px;width:200px;">280.8 kbps</div>
<div class="t r" style="left:338px;top:165px;width:200px;">10.1 kbps</div>
<div class="t r" style="left:438px;top:165px;width:200px;">24</div>
<div class="t r" style="left:538px;top:165px;width:200px;">27</div>
<div class="t" style="left:3px;top:180px;">DR</div>
<svg style="position:absolute;left:48px;top:182px" width="15" height="10"><path d="M0.5 4.5 L4 1 L5 2.5 L4 4.5 L5 6.5 L4 8 Z" fill="#d8d8f0" stroke="#000" stroke-width="1.15" stroke-linejoin="miter"/><path d="M14 4.5 L10.5 1 L9.5 2.5 L10.5 4.5 L9.5 6.5 L10.5 8 Z" fill="#d8d8f0" stroke="#000" stroke-width="1.15"/><path d="M6 4.5 H8.3" stroke="#000" stroke-width="1.1"/></svg>
<div class="t" style="left:63px;top:180px;">&lt;pppoe-sal...</div>
<div class="t" style="left:133px;top:180px;">PPPoE Server Binding</div>
<div class="t r" style="left:98px;top:180px;width:200px;"></div>
<div class="t r" style="left:218px;top:180px;width:200px;">315.8 kbps</div>
<div class="t r" style="left:338px;top:180px;width:200px;">8.3 kbps</div>
<div class="t r" style="left:438px;top:180px;width:200px;">33</div>
<div class="t r" style="left:538px;top:180px;width:200px;">19</div>
<div class="t" style="left:3px;top:195px;">DR</div>
<svg style="position:absolute;left:48px;top:197px" width="15" height="10"><path d="M0.5 4.5 L4 1 L5 2.5 L4 4.5 L5 6.5 L4 8 Z" fill="#d8d8f0" stroke="#000" stroke-width="1.15" stroke-linejoin="miter"/><path d="M14 4.5 L10.5 1 L9.5 2.5 L10.5 4.5 L9.5 6.5 L10.5 8 Z" fill="#d8d8f0" stroke="#000" stroke-width="1.15"/><path d="M6 4.5 H8.3" stroke="#000" stroke-width="1.1"/></svg>
<div class="t" style="left:63px;top:195px;">&lt;pppoe-ros...</div>
<div class="t" style="left:133px;top:195px;">PPPoE Server Binding</div>
<div class="t r" style="left:98px;top:195px;width:200px;"></div>
<div class="t r" style="left:218px;top:195px;width:200px;">784 bps</div>
<div class="t r" style="left:338px;top:195px;width:200px;">424 bps</div>
<div class="t r" style="left:438px;top:195px;width:200px;">1</div>
<div class="t r" style="left:538px;top:195px;width:200px;">1</div>
<div class="t" style="left:3px;top:210px;">DR</div>
<svg style="position:absolute;left:48px;top:212px" width="15" height="10"><path d="M0.5 4.5 L4 1 L5 2.5 L4 4.5 L5 6.5 L4 8 Z" fill="#d8d8f0" stroke="#000" stroke-width="1.15" stroke-linejoin="miter"/><path d="M14 4.5 L10.5 1 L9.5 2.5 L10.5 4.5 L9.5 6.5 L10.5 8 Z" fill="#d8d8f0" stroke="#000" stroke-width="1.15"/><path d="M6 4.5 H8.3" stroke="#000" stroke-width="1.1"/></svg>
<div class="t" style="left:63px;top:210px;">&lt;pppoe-rob...</div>
<div class="t" style="left:133px;top:210px;">PPPoE Server Binding</div>
<div class="t r" style="left:98px;top:210px;width:200px;"></div>
<div class="t r" style="left:218px;top:210px;width:200px;">0 bps</div>
<div class="t r" style="left:338px;top:210px;width:200px;">0 bps</div>
<div class="t r" style="left:438px;top:210px;width:200px;">0</div>
<div class="t r" style="left:538px;top:210px;width:200px;">0</div>
<div class="t" style="left:3px;top:225px;">DR</div>
<svg style="position:absolute;left:48px;top:227px" width="15" height="10"><path d="M0.5 4.5 L4 1 L5 2.5 L4 4.5 L5 6.5 L4 8 Z" fill="#d8d8f0" stroke="#000" stroke-width="1.15" stroke-linejoin="miter"/><path d="M14 4.5 L10.5 1 L9.5 2.5 L10.5 4.5 L9.5 6.5 L10.5 8 Z" fill="#d8d8f0" stroke="#000" stroke-width="1.15"/><path d="M6 4.5 H8.3" stroke="#000" stroke-width="1.1"/></svg>
<div class="t" style="left:63px;top:225px;">&lt;pppoe-riqu...</div>
<div class="t" style="left:133px;top:225px;">PPPoE Server Binding</div>
<div class="t r" style="left:98px;top:225px;width:200px;"></div>
<div class="t r" style="left:218px;top:225px;width:200px;">0 bps</div>
<div class="t r" style="left:338px;top:225px;width:200px;">0 bps</div>
<div class="t r" style="left:438px;top:225px;width:200px;">0</div>
<div class="t r" style="left:538px;top:225px;width:200px;">0</div>
<div class="t" style="left:3px;top:240px;">DR</div>
<svg style="position:absolute;left:48px;top:242px" width="15" height="10"><path d="M0.5 4.5 L4 1 L5 2.5 L4 4.5 L5 6.5 L4 8 Z" fill="#d8d8f0" stroke="#000" stroke-width="1.15" stroke-linejoin="miter"/><path d="M14 4.5 L10.5 1 L9.5 2.5 L10.5 4.5 L9.5 6.5 L10.5 8 Z" fill="#d8d8f0" stroke="#000" stroke-width="1.15"/><path d="M6 4.5 H8.3" stroke="#000" stroke-width="1.1"/></svg>
<div class="t" style="left:63px;top:240px;">&lt;pppoe-raf...</div>
<div class="t" style="left:133px;top:240px;">PPPoE Server Binding</div>
<div class="t r" style="left:98px;top:240px;width:200px;"></div>
<div class="t r" style="left:218px;top:240px;width:200px;">1577.2 kbps</div>
<div class="t r" style="left:338px;top:240px;width:200px;">210.3 kbps</div>
<div class="t r" style="left:438px;top:240px;width:200px;">211</div>
<div class="t r" style="left:538px;top:240px;width:200px;">188</div>
<div class="t" style="left:3px;top:255px;">DR</div>
<svg style="position:absolute;left:48px;top:257px" width="15" height="10"><path d="M0.5 4.5 L4 1 L5 2.5 L4 4.5 L5 6.5 L4 8 Z" fill="#d8d8f0" stroke="#000" stroke-width="1.15" stroke-linejoin="miter"/><path d="M14 4.5 L10.5 1 L9.5 2.5 L10.5 4.5 L9.5 6.5 L10.5 8 Z" fill="#d8d8f0" stroke="#000" stroke-width="1.15"/><path d="M6 4.5 H8.3" stroke="#000" stroke-width="1.1"/></svg>
<div class="t" style="left:63px;top:255px;">&lt;pppoe-pq...</div>
<div class="t" style="left:133px;top:255px;">PPPoE Server Binding</div>
<div class="t r" style="left:98px;top:255px;width:200px;"></div>
<div class="t r" style="left:218px;top:255px;width:200px;">0 bps</div>
<div class="t r" style="left:338px;top:255px;width:200px;">0 bps</div>
<div class="t r" style="left:438px;top:255px;width:200px;">0</div>
<div class="t r" style="left:538px;top:255px;width:200px;">0</div>
<div class="t" style="left:3px;top:270px;">DR</div>
<svg style="position:absolute;left:48px;top:272px" width="15" height="10"><path d="M0.5 4.5 L4 1 L5 2.5 L4 4.5 L5 6.5 L4 8 Z" fill="#d8d8f0" stroke="#000" stroke-width="1.15" stroke-linejoin="miter"/><path d="M14 4.5 L10.5 1 L9.5 2.5 L10.5 4.5 L9.5 6.5 L10.5 8 Z" fill="#d8d8f0" stroke="#000" stroke-width="1.15"/><path d="M6 4.5 H8.3" stroke="#000" stroke-width="1.1"/></svg>
<div class="t" style="left:63px;top:270px;">&lt;pppoe-pla...</div>
<div class="t" style="left:133px;top:270px;">PPPoE Server Binding</div>
<div class="t r" style="left:98px;top:270px;width:200px;"></div>
<div class="t r" style="left:218px;top:270px;width:200px;">41.6 kbps</div>
<div class="t r" style="left:338px;top:270px;width:200px;">33.5 kbps</div>
<div class="t r" style="left:438px;top:270px;width:200px;">14</div>
<div class="t r" style="left:538px;top:270px;width:200px;">15</div>
<div class="t" style="left:3px;top:285px;">DR</div>
<svg style="position:absolute;left:48px;top:287px" width="15" height="10"><path d="M0.5 4.5 L4 1 L5 2.5 L4 4.5 L5 6.5 L4 8 Z" fill="#d8d8f0" stroke="#000" stroke-width="1.15" stroke-linejoin="miter"/><path d="M14 4.5 L10.5 1 L9.5 2.5 L10.5 4.5 L9.5 6.5 L10.5 8 Z" fill="#d8d8f0" stroke="#000" stroke-width="1.15"/><path d="M6 4.5 H8.3" stroke="#000" stroke-width="1.1"/></svg>
<div class="t" style="left:63px;top:285px;">&lt;pppoe-pla...</div>
<div class="t" style="left:133px;top:285px;">PPPoE Server Binding</div>
<div class="t r" style="left:98px;top:285px;width:200px;"></div>
<div class="t r" style="left:218px;top:285px;width:200px;">0 bps</div>
<div class="t r" style="left:338px;top:285px;width:200px;">0 bps</div>
<div class="t r" style="left:438px;top:285px;width:200px;">0</div>
<div class="t r" style="left:538px;top:285px;width:200px;">0</div>
<div class="t" style="left:3px;top:300px;">DR</div>
<svg style="position:absolute;left:48px;top:302px" width="15" height="10"><path d="M0.5 4.5 L4 1 L5 2.5 L4 4.5 L5 6.5 L4 8 Z" fill="#d8d8f0" stroke="#000" stroke-width="1.15" stroke-linejoin="miter"/><path d="M14 4.5 L10.5 1 L9.5 2.5 L10.5 4.5 L9.5 6.5 L10.5 8 Z" fill="#d8d8f0" stroke="#000" stroke-width="1.15"/><path d="M6 4.5 H8.3" stroke="#000" stroke-width="1.1"/></svg>
<div class="t" style="left:63px;top:300px;">&lt;pppoe-pla...</div>
<div class="t" style="left:133px;top:300px;">PPPoE Server Binding</div>
<div class="t r" style="left:98px;top:300px;width:200px;"></div>
<div class="t r" style="left:218px;top:300px;width:200px;">2.1 kbps</div>
<div class="t r" style="left:338px;top:300px;width:200px;">48.3 kbps</div>
<div class="t r" style="left:438px;top:300px;width:200px;">4</div>
<div class="t r" style="left:538px;top:300px;width:200px;">4</div>
<div class="t" style="left:3px;top:315px;">DR</div>
<svg style="position:absolute;left:48px;top:317px" width="15" height="10"><path d="M0.5 4.5 L4 1 L5 2.5 L4 4.5 L5 6.5 L4 8 Z" fill="#d8d8f0" stroke="#000" stroke-width="1.15" stroke-linejoin="miter"/><path d="M14 4.5 L10.5 1 L9.5 2.5 L10.5 4.5 L9.5 6.5 L10.5 8 Z" fill="#d8d8f0" stroke="#000" stroke-width="1.15"/><path d="M6 4.5 H8.3" stroke="#000" stroke-width="1.1"/></svg>
<div class="t" style="left:63px;top:315px;">&lt;pppoe-pa...</div>
<div class="t" style="left:133px;top:315px;">PPPoE Server Binding</div>
<div class="t r" style="left:98px;top:315px;width:200px;"></div>
<div class="t r" style="left:218px;top:315px;width:200px;">0 bps</div>
<div class="t r" style="left:338px;top:315px;width:200px;">0 bps</div>
<div class="t r" style="left:438px;top:315px;width:200px;">0</div>
<div class="t r" style="left:538px;top:315px;width:200px;">0</div>
<div class="t" style="left:3px;top:330px;">DR</div>
<svg style="position:absolute;left:48px;top:332px" width="15" height="10"><path d="M0.5 4.5 L4 1 L5 2.5 L4 4.5 L5 6.5 L4 8 Z" fill="#d8d8f0" stroke="#000" stroke-width="1.15" stroke-linejoin="miter"/><path d="M14 4.5 L10.5 1 L9.5 2.5 L10.5 4.5 L9.5 6.5 L10.5 8 Z" fill="#d8d8f0" stroke="#000" stroke-width="1.15"/><path d="M6 4.5 H8.3" stroke="#000" stroke-width="1.1"/></svg>
<div class="t" style="left:63px;top:330px;">&lt;pppoe-ner...</div>
<div class="t" style="left:133px;top:330px;">PPPoE Server Binding</div>
<div class="t r" style="left:98px;top:330px;width:200px;"></div>
<div class="t r" style="left:218px;top:330px;width:200px;">0 bps</div>
<div class="t r" style="left:338px;top:330px;width:200px;">0 bps</div>
<div class="t r" style="left:438px;top:330px;width:200px;">0</div>
<div class="t r" style="left:538px;top:330px;width:200px;">0</div>
<div class="t" style="left:3px;top:345px;">DR</div>
<svg style="position:absolute;left:48px;top:347px" width="15" height="10"><path d="M0.5 4.5 L4 1 L5 2.5 L4 4.5 L5 6.5 L4 8 Z" fill="#d8d8f0" stroke="#000" stroke-width="1.15" stroke-linejoin="miter"/><path d="M14 4.5 L10.5 1 L9.5 2.5 L10.5 4.5 L9.5 6.5 L10.5 8 Z" fill="#d8d8f0" stroke="#000" stroke-width="1.15"/><path d="M6 4.5 H8.3" stroke="#000" stroke-width="1.1"/></svg>
<div class="t" style="left:63px;top:345px;">&lt;pppoe-miri...</div>
<div class="t" style="left:133px;top:345px;">PPPoE Server Binding</div>
<div class="t r" style="left:98px;top:345px;width:200px;"></div>
<div class="t r" style="left:218px;top:345px;width:200px;">0 bps</div>
<div class="t r" style="left:338px;top:345px;width:200px;">0 bps</div>
<div class="t r" style="left:438px;top:345px;width:200px;">0</div>
<div class="t r" style="left:538px;top:345px;width:200px;">0</div>
<div class="t" style="left:3px;top:360px;">DR</div>
<svg style="position:absolute;left:48px;top:362px" width="15" height="10"><path d="M0.5 4.5 L4 1 L5 2.5 L4 4.5 L5 6.5 L4 8 Z" fill="#d8d8f0" stroke="#000" stroke-width="1.15" stroke-linejoin="miter"/><path d="M14 4.5 L10.5 1 L9.5 2.5 L10.5 4.5 L9.5 6.5 L10.5 8 Z" fill="#d8d8f0" stroke="#000" stroke-width="1.15"/><path d="M6 4.5 H8.3" stroke="#000" stroke-width="1.1"/></svg>
<div class="t" style="left:63px;top:360px;">&lt;pppoe-mdt...</div>
<div class="t" style="left:133px;top:360px;">PPPoE Server Binding</div>
<div class="t r" style="left:98px;top:360px;width:200px;"></div>
<div class="t r" style="left:218px;top:360px;width:200px;">0 bps</div>
<div class="t r" style="left:338px;top:360px;width:200px;">0 bps</div>
<div class="t r" style="left:438px;top:360px;width:200px;">0</div>
<div class="t r" style="left:538px;top:360px;width:200px;">0</div>
<div class="t" style="left:3px;top:375px;">DR</div>
<svg style="position:absolute;left:48px;top:377px" width="15" height="10"><path d="M0.5 4.5 L4 1 L5 2.5 L4 4.5 L5 6.5 L4 8 Z" fill="#d8d8f0" stroke="#000" stroke-width="1.15" stroke-linejoin="miter"/><path d="M14 4.5 L10.5 1 L9.5 2.5 L10.5 4.5 L9.5 6.5 L10.5 8 Z" fill="#d8d8f0" stroke="#000" stroke-width="1.15"/><path d="M6 4.5 H8.3" stroke="#000" stroke-width="1.1"/></svg>
<div class="t" style="left:63px;top:375px;">&lt;pppoe-mar...</div>
<div class="t" style="left:133px;top:375px;">PPPoE Server Binding</div>
<div class="t r" style="left:98px;top:375px;width:200px;"></div>
<div class="t r" style="left:218px;top:375px;width:200px;">0 bps</div>
<div class="t r" style="left:338px;top:375px;width:200px;">0 bps</div>
<div class="t r" style="left:438px;top:375px;width:200px;">0</div>
<div class="t r" style="left:538px;top:375px;width:200px;">0</div>
<div class="t" style="left:3px;top:390px;">DR</div>
<svg style="position:absolute;left:48px;top:392px" width="15" height="10"><path d="M0.5 4.5 L4 1 L5 2.5 L4 4.5 L5 6.5 L4 8 Z" fill="#d8d8f0" stroke="#000" stroke-width="1.15" stroke-linejoin="miter"/><path d="M14 4.5 L10.5 1 L9.5 2.5 L10.5 4.5 L9.5 6.5 L10.5 8 Z" fill="#d8d8f0" stroke="#000" stroke-width="1.15"/><path d="M6 4.5 H8.3" stroke="#000" stroke-width="1.1"/></svg>
<div class="t" style="left:63px;top:390px;">&lt;pppoe-juni...</div>
<div class="t" style="left:133px;top:390px;">PPPoE Server Binding</div>
<div class="t r" style="left:98px;top:390px;width:200px;"></div>
<div class="t r" style="left:218px;top:390px;width:200px;">1003.4 kbps</div>
<div class="t r" style="left:338px;top:390px;width:200px;">33.1 kbps</div>
<div class="t r" style="left:438px;top:390px;width:200px;">96</div>
<div class="t r" style="left:538px;top:390px;width:200px;">57</div>
<div class="t" style="left:3px;top:405px;">DR</div>
<svg style="position:absolute;left:48px;top:407px" width="15" height="10"><path d="M0.5 4.5 L4 1 L5 2.5 L4 4.5 L5 6.5 L4 8 Z" fill="#d8d8f0" stroke="#000" stroke-width="1.15" stroke-linejoin="miter"/><path d="M14 4.5 L10.5 1 L9.5 2.5 L10.5 4.5 L9.5 6.5 L10.5 8 Z" fill="#d8d8f0" stroke="#000" stroke-width="1.15"/><path d="M6 4.5 H8.3" stroke="#000" stroke-width="1.1"/></svg>
<div class="t" style="left:63px;top:405px;">&lt;pppoe-julio&gt;</div>
<div class="t" style="left:133px;top:405px;">PPPoE Server Binding</div>
<div class="t r" style="left:98px;top:405px;width:200px;"></div>
<div class="t r" style="left:218px;top:405px;width:200px;">139.4 kbps</div>
<div class="t r" style="left:338px;top:405px;width:200px;">7.6 kbps</div>
<div class="t r" style="left:438px;top:405px;width:200px;">14</div>
<div class="t r" style="left:538px;top:405px;width:200px;">11</div>
<div class="t" style="left:3px;top:420px;">DR</div>
<svg style="position:absolute;left:48px;top:422px" width="15" height="10"><path d="M0.5 4.5 L4 1 L5 2.5 L4 4.5 L5 6.5 L4 8 Z" fill="#d8d8f0" stroke="#000" stroke-width="1.15" stroke-linejoin="miter"/><path d="M14 4.5 L10.5 1 L9.5 2.5 L10.5 4.5 L9.5 6.5 L10.5 8 Z" fill="#d8d8f0" stroke="#000" stroke-width="1.15"/><path d="M6 4.5 H8.3" stroke="#000" stroke-width="1.1"/></svg>
<div class="t" style="left:63px;top:420px;">&lt;pppoe-jos...</div>
<div class="t" style="left:133px;top:420px;">PPPoE Server Binding</div>
<div class="t r" style="left:98px;top:420px;width:200px;"></div>
<div class="t r" style="left:218px;top:420px;width:200px;">0 bps</div>
<div class="t r" style="left:338px;top:420px;width:200px;">0 bps</div>
<div class="t r" style="left:438px;top:420px;width:200px;">0</div>
<div class="t r" style="left:538px;top:420px;width:200px;">0</div>
<div class="t" style="left:3px;top:435px;">DR</div>
<svg style="position:absolute;left:48px;top:437px" width="15" height="10"><path d="M0.5 4.5 L4 1 L5 2.5 L4 4.5 L5 6.5 L4 8 Z" fill="#d8d8f0" stroke="#000" stroke-width="1.15" stroke-linejoin="miter"/><path d="M14 4.5 L10.5 1 L9.5 2.5 L10.5 4.5 L9.5 6.5 L10.5 8 Z" fill="#d8d8f0" stroke="#000" stroke-width="1.15"/><path d="M6 4.5 H8.3" stroke="#000" stroke-width="1.1"/></svg>
<div class="t" style="left:63px;top:435px;">&lt;pppoe-joa...</div>
<div class="t" style="left:133px;top:435px;">PPPoE Server Binding</div>
<div class="t r" style="left:98px;top:435px;width:200px;"></div>
<div class="t r" style="left:218px;top:435px;width:200px;">75.4 kbps</div>
<div class="t r" style="left:338px;top:435px;width:200px;">22.7 kbps</div>
<div class="t r" style="left:438px;top:435px;width:200px;">46</div>
<div class="t r" style="left:538px;top:435px;width:200px;">52</div>
<div class="t" style="left:3px;top:450px;">DR</div>
<svg style="position:absolute;left:48px;top:452px" width="15" height="10"><path d="M0.5 4.5 L4 1 L5 2.5 L4 4.5 L5 6.5 L4 8 Z" fill="#d8d8f0" stroke="#000" stroke-width="1.15" stroke-linejoin="miter"/><path d="M14 4.5 L10.5 1 L9.5 2.5 L10.5 4.5 L9.5 6.5 L10.5 8 Z" fill="#d8d8f0" stroke="#000" stroke-width="1.15"/><path d="M6 4.5 H8.3" stroke="#000" stroke-width="1.1"/></svg>
<div class="t" style="left:63px;top:450px;">&lt;pppoe-gid...</div>
<div class="t" style="left:133px;top:450px;">PPPoE Server Binding</div>
<div class="t r" style="left:98px;top:450px;width:200px;"></div>
<div class="t r" style="left:218px;top:450px;width:200px;">0 bps</div>
<div class="t r" style="left:338px;top:450px;width:200px;">0 bps</div>
<div class="t r" style="left:438px;top:450px;width:200px;">0</div>
<div class="t r" style="left:538px;top:450px;width:200px;">0</div>
<div class="t" style="left:3px;top:465px;">DR</div>
<svg style="position:absolute;left:48px;top:467px" width="15" height="10"><path d="M0.5 4.5 L4 1 L5 2.5 L4 4.5 L5 6.5 L4 8 Z" fill="#d8d8f0" stroke="#000" stroke-width="1.15" stroke-linejoin="miter"/><path d="M14 4.5 L10.5 1 L9.5 2.5 L10.5 4.5 L9.5 6.5 L10.5 8 Z" fill="#d8d8f0" stroke="#000" stroke-width="1.15"/><path d="M6 4.5 H8.3" stroke="#000" stroke-width="1.1"/></svg>
<div class="t" style="left:63px;top:465px;">&lt;pppoe-da...</div>
<div class="t" style="left:133px;top:465px;">PPPoE Server Binding</div>
<div class="t r" style="left:98px;top:465px;width:200px;"></div>
<div class="t r" style="left:218px;top:465px;width:200px;">242.0 kbps</div>
<div class="t r" style="left:338px;top:465px;width:200px;">3.6 kbps</div>
<div class="t r" style="left:438px;top:465px;width:200px;">21</div>
<div class="t r" style="left:538px;top:465px;width:200px;">10</div>
<div class="t" style="left:3px;top:480px;">DR</div>
<svg style="position:absolute;left:48px;top:482px" width="15" height="10"><path d="M0.5 4.5 L4 1 L5 2.5 L4 4.5 L5 6.5 L4 8 Z" fill="#d8d8f0" stroke="#000" stroke-width="1.15" stroke-linejoin="miter"/><path d="M14 4.5 L10.5 1 L9.5 2.5 L10.5 4.5 L9.5 6.5 L10.5 8 Z" fill="#d8d8f0" stroke="#000" stroke-width="1.15"/><path d="M6 4.5 H8.3" stroke="#000" stroke-width="1.1"/></svg>
<div class="t" style="left:63px;top:480px;">&lt;pppoe-da...</div>
<div class="t" style="left:133px;top:480px;">PPPoE Server Binding</div>
<div class="t r" style="left:98px;top:480px;width:200px;"></div>
<div class="t r" style="left:218px;top:480px;width:200px;">503.6 kbps</div>
<div class="t r" style="left:338px;top:480px;width:200px;">42.0 kbps</div>
<div class="t r" style="left:438px;top:480px;width:200px;">58</div>
<div class="t r" style="left:538px;top:480px;width:200px;">53</div>
<div class="t" style="left:3px;top:495px;">DR</div>
<svg style="position:absolute;left:48px;top:497px" width="15" height="10"><path d="M0.5 4.5 L4 1 L5 2.5 L4 4.5 L5 6.5 L4 8 Z" fill="#d8d8f0" stroke="#000" stroke-width="1.15" stroke-linejoin="miter"/><path d="M14 4.5 L10.5 1 L9.5 2.5 L10.5 4.5 L9.5 6.5 L10.5 8 Z" fill="#d8d8f0" stroke="#000" stroke-width="1.15"/><path d="M6 4.5 H8.3" stroke="#000" stroke-width="1.1"/></svg>
<div class="t" style="left:63px;top:495px;">&lt;pppoe-ch...</div>
<div class="t" style="left:133px;top:495px;">PPPoE Server Binding</div>
<div class="t r" style="left:98px;top:495px;width:200px;"></div>
<div class="t r" style="left:218px;top:495px;width:200px;">1510.3 kbps</div>
<div class="t r" style="left:338px;top:495px;width:200px;">44.2 kbps</div>
<div class="t r" style="left:438px;top:495px;width:200px;">135</div>
<div class="t r" style="left:538px;top:495px;width:200px;">87</div>
<div class="t" style="left:3px;top:510px;">DR</div>
<svg style="position:absolute;left:48px;top:512px" width="15" height="10"><path d="M0.5 4.5 L4 1 L5 2.5 L4 4.5 L5 6.5 L4 8 Z" fill="#d8d8f0" stroke="#000" stroke-width="1.15" stroke-linejoin="miter"/><path d="M14 4.5 L10.5 1 L9.5 2.5 L10.5 4.5 L9.5 6.5 L10.5 8 Z" fill="#d8d8f0" stroke="#000" stroke-width="1.15"/><path d="M6 4.5 H8.3" stroke="#000" stroke-width="1.1"/></svg>
<div class="t" style="left:63px;top:510px;">&lt;pppoe-cas...</div>
<div class="t" style="left:133px;top:510px;">PPPoE Server Binding</div>
<div class="t r" style="left:98px;top:510px;width:200px;"></div>
<div class="t r" style="left:218px;top:510px;width:200px;">640 bps</div>
<div class="t r" style="left:338px;top:510px;width:200px;">632 bps</div>
<div class="t r" style="left:438px;top:510px;width:200px;">1</div>
<div class="t r" style="left:538px;top:510px;width:200px;">1</div>
<div class="t" style="left:3px;top:525px;">DR</div>
<svg style="position:absolute;left:48px;top:527px" width="15" height="10"><path d="M0.5 4.5 L4 1 L5 2.5 L4 4.5 L5 6.5 L4 8 Z" fill="#d8d8f0" stroke="#000" stroke-width="1.15" stroke-linejoin="miter"/><path d="M14 4.5 L10.5 1 L9.5 2.5 L10.5 4.5 L9.5 6.5 L10.5 8 Z" fill="#d8d8f0" stroke="#000" stroke-width="1.15"/><path d="M6 4.5 H8.3" stroke="#000" stroke-width="1.1"/></svg>
<div class="t" style="left:63px;top:525px;">&lt;pppoe-carl...</div>
<div class="t" style="left:133px;top:525px;">PPPoE Server Binding</div>
<div class="t r" style="left:98px;top:525px;width:200px;"></div>
<div class="t r" style="left:218px;top:525px;width:200px;">0 bps</div>
<div class="t r" style="left:338px;top:525px;width:200px;">424 bps</div>
<div class="t r" style="left:438px;top:525px;width:200px;">0</div>
<div class="t r" style="left:538px;top:525px;width:200px;">1</div>
<div class="t" style="left:3px;top:540px;">DR</div>
<svg style="position:absolute;left:48px;top:542px" width="15" height="10"><path d="M0.5 4.5 L4 1 L5 2.5 L4 4.5 L5 6.5 L4 8 Z" fill="#d8d8f0" stroke="#000" stroke-width="1.15" stroke-linejoin="miter"/><path d="M14 4.5 L10.5 1 L9.5 2.5 L10.5 4.5 L9.5 6.5 L10.5 8 Z" fill="#d8d8f0" stroke="#000" stroke-width="1.15"/><path d="M6 4.5 H8.3" stroke="#000" stroke-width="1.1"/></svg>
<div class="t" style="left:63px;top:540px;">&lt;pppoe-caio&gt;</div>
<div class="t" style="left:133px;top:540px;">PPPoE Server Binding</div>
<div class="t r" style="left:98px;top:540px;width:200px;"></div>
<div class="t r" style="left:218px;top:540px;width:200px;">0 bps</div>
<div class="t r" style="left:338px;top:540px;width:200px;">520 bps</div>
<div class="t r" style="left:438px;top:540px;width:200px;">0</div>
<div class="t r" style="left:538px;top:540px;width:200px;">1</div>
<div class="t" style="left:3px;top:555px;">DR</div>
<svg style="position:absolute;left:48px;top:557px" width="15" height="10"><path d="M0.5 4.5 L4 1 L5 2.5 L4 4.5 L5 6.5 L4 8 Z" fill="#d8d8f0" stroke="#000" stroke-width="1.15" stroke-linejoin="miter"/><path d="M14 4.5 L10.5 1 L9.5 2.5 L10.5 4.5 L9.5 6.5 L10.5 8 Z" fill="#d8d8f0" stroke="#000" stroke-width="1.15"/><path d="M6 4.5 H8.3" stroke="#000" stroke-width="1.1"/></svg>
<div class="t" style="left:63px;top:555px;">&lt;pppoe-bar...</div>
<div class="t" style="left:133px;top:555px;">PPPoE Server Binding</div>
<div class="t r" style="left:98px;top:555px;width:200px;"></div>
<div class="t r" style="left:218px;top:555px;width:200px;">0 bps</div>
<div class="t r" style="left:338px;top:555px;width:200px;">0 bps</div>
<div class="t r" style="left:438px;top:555px;width:200px;">0</div>
<div class="t r" style="left:538px;top:555px;width:200px;">0</div>
<div class="t" style="left:3px;top:570px;">DR</div>
<svg style="position:absolute;left:48px;top:572px" width="15" height="10"><path d="M0.5 4.5 L4 1 L5 2.5 L4 4.5 L5 6.5 L4 8 Z" fill="#d8d8f0" stroke="#000" stroke-width="1.15" stroke-linejoin="miter"/><path d="M14 4.5 L10.5 1 L9.5 2.5 L10.5 4.5 L9.5 6.5 L10.5 8 Z" fill="#d8d8f0" stroke="#000" stroke-width="1.15"/><path d="M6 4.5 H8.3" stroke="#000" stroke-width="1.1"/></svg>
<div class="t" style="left:63px;top:570px;">&lt;pppoe-alin...</div>
<div class="t" style="left:133px;top:570px;">PPPoE Server Binding</div>
<div class="t r" style="left:98px;top:570px;width:200px;"></div>
<div class="t r" style="left:218px;top:570px;width:200px;">718.1 kbps</div>
<div class="t r" style="left:338px;top:570px;width:200px;">28.0 kbps</div>
<div class="t r" style="left:438px;top:570px;width:200px;">70</div>
<div class="t r" style="left:538px;top:570px;width:200px;">54</div>
<div class="t" style="left:3px;top:585px;">DR</div>
<svg style="position:absolute;left:48px;top:587px" width="15" height="10"><path d="M0.5 4.5 L4 1 L5 2.5 L4 4.5 L5 6.5 L4 8 Z" fill="#d8d8f0" stroke="#000" stroke-width="1.15" stroke-linejoin="miter"/><path d="M14 4.5 L10.5 1 L9.5 2.5 L10.5 4.5 L9.5 6.5 L10.5 8 Z" fill="#d8d8f0" stroke="#000" stroke-width="1.15"/><path d="M6 4.5 H8.3" stroke="#000" stroke-width="1.1"/></svg>
<div class="t" style="left:63px;top:585px;">&lt;pppoe-ale...</div>
<div class="t" style="left:133px;top:585px;">PPPoE Server Binding</div>
<div class="t r" style="left:98px;top:585px;width:200px;"></div>
<div class="t r" style="left:218px;top:585px;width:200px;">2.1 Mbps</div>
<div class="t r" style="left:338px;top:585px;width:200px;">82.8 kbps</div>
<div class="t r" style="left:438px;top:585px;width:200px;">199</div>
<div class="t r" style="left:538px;top:585px;width:200px;">176</div></div>
<div class="t" style="left:172px;top:129px;">Name</div>
<div style="left:169px;top:128px;width:1px;height:16px;background:#a0a0a0"></div>
<div class="t" style="left:274px;top:129px;">Type</div>
<div style="left:271px;top:128px;width:1px;height:16px;background:#a0a0a0"></div>
<div class="t" style="left:394px;top:129px;">L2 MTU</div>
<div style="left:391px;top:128px;width:1px;height:16px;background:#a0a0a0"></div>
<div class="t" style="left:444px;top:129px;">Tx</div>
<div style="left:441px;top:128px;width:1px;height:16px;background:#a0a0a0"></div>
<div class="t" style="left:564px;top:129px;">Rx</div>
<div style="left:561px;top:128px;width:1px;height:16px;background:#a0a0a0"></div>
<div class="t" style="left:684px;top:129px;">Tx Packet (p/s)</div>
<div style="left:681px;top:128px;width:1px;height:16px;background:#a0a0a0"></div>
<div class="t" style="left:784px;top:129px;">Rx Packet (p/s)</div>
<div style="left:781px;top:128px;width:1px;height:16px;background:#a0a0a0"></div>
<div style="left:881px;top:128px;width:1px;height:16px;background:#a0a0a0"></div>
<svg style="position:absolute;left:261px;top:133px" width="8" height="7" viewBox="0 0 8 7"><path d="M0.5 0.5 H7.5 L4 6.5 Z" fill="none" stroke="#808080"/></svg>
<div style="left:141px;top:127px;width:1px;height:611px;background:#a0a0a0"></div>
<div style="left:141px;top:737px;width:866px;height:1px;background:#a0a0a0"></div>
<div style="left:989px;top:127px;width:17px;height:611px;background:#f0f0f0;border-left:1px solid #d8d8d8"></div>
<div style="left:989px;top:127px;width:17px;height:18px;background:#f0f0f0;border:1px solid #a0a0a0"></div>
<svg style="position:absolute;left:993px;top:133px" width="10" height="6" viewBox="0 0 10 6"><path d="M0 0 H10 L5 6 Z" fill="#000"/></svg>
<div style="left:989px;top:145px;width:17px;height:15px;background:#f0f0f0;border-left:1px solid #d0d0d0;border-bottom:1px solid #d0d0d0"></div>
<svg style="position:absolute;left:993px;top:148px" width="9" height="8" viewBox="0 0 9 8"><path d="M4.5 0 L9 4.5 H6.5 V8 H2.5 V4.5 H0 Z" fill="#000"/></svg>
<div style="left:990px;top:682px;width:15px;height:40px;background:#cdcdcd"></div>
<div style="left:989px;top:722px;width:17px;height:15px;background:#f0f0f0;border-left:1px solid #d0d0d0;border-top:1px solid #d0d0d0"></div>
<svg style="position:absolute;left:993px;top:726px" width="9" height="8" viewBox="0 0 9 8"><path d="M2.5 0 H6.5 V3.5 H9 L4.5 8 L0 3.5 H2.5 Z" fill="#000"/></svg>
<div style="left:141px;top:738px;width:866px;height:21px;border-left:1px solid #a0a0a0;border-bottom:1px solid #a0a0a0"></div>
<div class="t" style="left:144px;top:740px;font-size:11.5px;letter-spacing:-0.4px">42 items (1 selected)</div><div style="left:1011px;top:53px;width:821px;height:606px;background:#f0f0f0;border:1px solid #000;border-top-width:2px;border-left-width:2px;border-right-width:2px;border-bottom-width:2px"></div>
<div style="left:1013px;top:55px;width:817px;height:1px;background:#f8f8f8"></div>
<div style="left:1013px;top:55px;width:1px;height:600px;background:#f8f8f8"></div>
<div style="left:1014px;top:56px;width:815px;height:21px;background:#c2c2c2"></div>
<div class="t" style="left:1018px;top:61px;color:#f5f5f5;font-size:12px;letter-spacing:-0.3px">Queue List</div>
<div style="left:1794px;top:59px;width:15px;height:15px;background:#f0f0f0;border:1px solid #333"></div>
<div style="left:1797px;top:62px;width:9px;height:8px;border:1px solid #333;border-top-width:2px"></div>
<div style="left:1811px;top:59px;width:15px;height:15px;background:#f0f0f0;border:1px solid #333"></div>
<svg style="position:absolute;left:1814px;top:62px" width="9" height="9" viewBox="0 0 9 9"><path d="M1 1 L8 8 M8 1 L1 8" stroke="#222" stroke-width="2.2"/></svg>
<div style="left:1014px;top:101px;width:813px;height:532px;border-top:1px solid #fff;border-left:1px solid #fff;border-right:1px solid #a0a0a0"></div>
<div style="left:1016px;top:79px;width:86px;height:22px;background:#f0f0f0;border-right:1px solid #c8c8c8"></div>
<div class="t" style="left:1016px;top:83px;width:86px;text-align:center;font-size:11.5px;letter-spacing:-0.3px">Simple Queues</div>
<div style="left:1102px;top:81px;width:91px;height:20px;background:#d4d4d4;border-right:1px solid #f4f4f4"></div>
<div class="t" style="left:1102px;top:85px;width:92px;text-align:center;font-size:11.5px;letter-spacing:-0.3px">Interface Queues</div>
<div style="left:1194px;top:81px;width:68px;height:20px;background:#d4d4d4;border-right:1px solid #f4f4f4"></div>
<div class="t" style="left:1194px;top:85px;width:69px;text-align:center;font-size:11.5px;letter-spacing:-0.3px">Queue Tree</div>
<div style="left:1263px;top:81px;width:75px;height:20px;background:#d4d4d4;border-right:1px solid #f4f4f4"></div>
<div class="t" style="left:1263px;top:85px;width:76px;text-align:center;font-size:11.5px;letter-spacing:-0.3px">Queue Types</div>
<div style="left:1018px;top:105px;width:22px;height:23px;background:#f0f0f0;border:1px solid #a8a8a8;"></div>
<svg style="position:absolute;left:1023px;top:110px" width="13" height="13"><path d="M4.5 0.5h4v4h4v4h-4v4h-4v-4h-4v-4h4z" fill="#0000e0" stroke="#00007a" stroke-width="1"/></svg>
<div style="left:1043px;top:105px;width:23px;height:23px;background:#f0f0f0;border:1px solid #a8a8a8;"></div>
<svg style="position:absolute;left:1048px;top:113px" width="14" height="6"><rect x="0.5" y="0.5" width="13" height="5" fill="#f0f0f0" stroke="#a0a0a0"/></svg>
<div style="left:1075px;top:105px;width:23px;height:23px;background:#f0f0f0;border:1px solid #a8a8a8;"></div>
<svg style="position:absolute;left:1080px;top:111px" width="13" height="11"><path d="M1 5 L5 9 L12 1.5" stroke="#c0c0c0" stroke-width="2.6" fill="none"/></svg>
<div style="left:1101px;top:105px;width:23px;height:23px;background:#f0f0f0;border:1px solid #a8a8a8;"></div>
<svg style="position:absolute;left:1107px;top:111px" width="12" height="12"><path d="M1.5 1.5 L10.5 10.5 M10.5 1.5 L1.5 10.5" stroke="#c8c8c8" stroke-width="2.8"/></svg>
<div style="left:1133px;top:105px;width:23px;height:23px;background:#f0f0f0;border:1px solid #a8a8a8;"></div>
<svg style="position:absolute;left:1137px;top:111px" width="15" height="11"><path d="M0.5 4.5 L4.5 0.5 H14.5 V10.5 H0.5 Z" fill="#f0f0f0" stroke="#909090"/></svg>
<div style="left:1165px;top:105px;width:23px;height:23px;background:#f0f0f0;border:1px solid #a8a8a8;"></div>
<svg style="position:absolute;left:1170px;top:110px" width="14" height="14"><path d="M0.5 0.5 H13.5 L8.5 6.5 V13.5 L5.5 11.5 V6.5 Z" fill="#b8c4d8" stroke="#1a2a4a" stroke-width="1.2"/></svg>
<div style="left:1197px;top:105px;width:108px;height:23px;background:#f0f0f0;border:1px solid #a8a8a8;"></div>
<svg style="position:absolute;left:1202px;top:110px" width="14" height="13"><path d="M1 2h2M1 6h2M1 10h2M5 2h8M5 6h6M5 10h8" stroke="#b0b0b0" stroke-width="1.4"/></svg>
<div class="t" style="left:1219px;top:110px;color:#8c8c8c;font-size:11.5px;letter-spacing:-0.35px">Reset Counters</div>
<div style="left:1308px;top:105px;width:122px;height:23px;background:#f0f0f0;border:1px solid #a8a8a8;"></div>
<div class="t" style="left:1313px;top:109px;font-weight:bold;font-size:13px;letter-spacing:0">oo</div>
<div class="t" style="left:1333px;top:110px;font-size:11.5px;letter-spacing:-0.45px">Reset All Counters</div>
<div style="left:1764px;top:107px;width:60px;height:18px;background:#fff;border:1px solid #a8a8a8"></div>
<div class="t" style="left:1769px;top:109px;color:#a0a0a0;font-style:italic;font-size:11.5px">Find</div>
<div style="left:1017px;top:131px;width:792px;height:502px;background:#fff;border-left:1px solid #a0a0a0"></div>
<div style="left:1017px;top:131px;width:792px;height:18px;background:#f0f0f0;border-top:1px solid #a0a0a0;border-bottom:1px solid #a0a0a0;border-left:1px solid #a0a0a0"></div>
<div class="tb" style="left:1017px;top:149px;width:791px;height:484px;overflow:hidden"><div style="left:0;top:14px;width:791px;height:1px;background:#e6e6e6"></div><div style="left:0;top:29px;width:791px;height:1px;background:#e6e6e6"></div><div style="left:0;top:44px;width:791px;height:1px;background:#e6e6e6"></div><div style="left:0;top:59px;width:791px;height:1px;background:#e6e6e6"></div><div style="left:0;top:74px;width:791px;height:1px;background:#e6e6e6"></div><div style="left:0;top:89px;width:791px;height:1px;background:#e6e6e6"></div><div style="left:0;top:104px;width:791px;height:1px;background:#e6e6e6"></div><div style="left:0;top:119px;width:791px;height:1px;background:#e6e6e6"></div><div style="left:0;top:134px;width:791px;height:1px;background:#e6e6e6"></div><div style="left:0;top:149px;width:791px;height:1px;background:#e6e6e6"></div><div style="left:0;top:164px;width:791px;height:1px;background:#e6e6e6"></div><div style="left:0;top:179px;width:791px;height:1px;background:#e6e6e6"></div><div style="left:0;top:194px;width:791px;height:1px;background:#e6e6e6"></div><div style="left:0;top:209px;width:791px;height:1px;background:#e6e6e6"></div><div style="left:0;top:224px;width:791px;height:1px;background:#e6e6e6"></div><div style="left:0;top:239px;width:791px;height:1px;background:#e6e6e6"></div><div style="left:0;top:254px;width:791px;height:1px;background:#e6e6e6"></div><div style="left:0;top:269px;width:791px;height:1px;background:#e6e6e6"></div><div style="left:0;top:284px;width:791px;height:1px;background:#e6e6e6"></div><div style="left:0;top:299px;width:791px;height:1px;background:#e6e6e6"></div><div style="left:0;top:314px;width:791px;height:1px;background:#e6e6e6"></div><div style="left:0;top:329px;width:791px;height:1px;background:#e6e6e6"></div><div style="left:0;top:344px;width:791px;height:1px;background:#e6e6e6"></div><div style="left:0;top:359px;width:791px;height:1px;background:#e6e6e6"></div><div style="left:0;top:374px;width:791px;height:1px;background:#e6e6e6"></div><div style="left:0;top:389px;width:791px;height:1px;background:#e6e6e6"></div><div style="left:0;top:404px;width:791px;height:1px;background:#e6e6e6"></div><div style="left:0;top:419px;width:791px;height:1px;background:#e6e6e6"></div><div style="left:0;top:434px;width:791px;height:1px;background:#e6e6e6"></div><div style="left:0;top:449px;width:791px;height:1px;background:#e6e6e6"></div><div style="left:0;top:464px;width:791px;height:1px;background:#e6e6e6"></div><div style="left:0;top:479px;width:791px;height:1px;background:#e6e6e6"></div><div style="left:0;top:494px;width:791px;height:1px;background:#e6e6e6"></div><div style="left:24px;top:0;width:1px;height:600px;background:#e6e6e6"></div><div style="left:46px;top:0;width:1px;height:600px;background:#e6e6e6"></div><div style="left:132px;top:0;width:1px;height:600px;background:#e6e6e6"></div><div style="left:200px;top:0;width:1px;height:600px;background:#e6e6e6"></div><div style="left:300px;top:0;width:1px;height:600px;background:#e6e6e6"></div><div style="left:404px;top:0;width:1px;height:600px;background:#e6e6e6"></div><div style="left:504px;top:0;width:1px;height:600px;background:#e6e6e6"></div><div style="left:604px;top:0;width:1px;height:600px;background:#e6e6e6"></div><div class="t r" style="left:-8px;top:0px;width:30px;">32</div>
<div class="t" style="left:27px;top:0px;">D</div>
<svg style="position:absolute;left:52px;top:1px" width="11" height="12"><rect x="1" y="1" width="9" height="10" fill="#33e633"/><path d="M3 1 H8" stroke="#000" stroke-width="1.2"/><path d="M1.2 1 V10" stroke="#000" stroke-width="1.3" stroke-dasharray="1.5 1.3"/><path d="M9.8 1 V10" stroke="#000" stroke-width="1.3" stroke-dasharray="1.5 1.3"/><path d="M0 10.8 H11" stroke="#000" stroke-width="1.6"/><path d="M2.5 4 H8.5 M2.5 7 H8.5" stroke="#1aa01a" stroke-width="0.8" opacity="0.7"/></svg>
<div class="t" style="left:65px;top:0px;">&lt;pppoe-julio&gt;</div>
<div class="t" style="left:135px;top:0px;">&lt;pppoe-julio&gt;</div>
<div class="t" style="left:203px;top:0px;">300k</div>
<div class="t" style="left:303px;top:0px;">3150k</div>
<div class="t r" style="left:-8px;top:15px;width:30px;">11</div>
<div class="t" style="left:27px;top:15px;">D</div>
<svg style="position:absolute;left:52px;top:16px" width="11" height="12"><rect x="1" y="1" width="9" height="10" fill="#33e633"/><path d="M3 1 H8" stroke="#000" stroke-width="1.2"/><path d="M1.2 1 V10" stroke="#000" stroke-width="1.3" stroke-dasharray="1.5 1.3"/><path d="M9.8 1 V10" stroke="#000" stroke-width="1.3" stroke-dasharray="1.5 1.3"/><path d="M0 10.8 H11" stroke="#000" stroke-width="1.6"/><path d="M2.5 4 H8.5 M2.5 7 H8.5" stroke="#1aa01a" stroke-width="0.8" opacity="0.7"/></svg>
<div class="t" style="left:65px;top:15px;">&lt;pppoe-pla...</div>
<div class="t" style="left:135px;top:15px;">&lt;pppoe-pla...</div>
<div class="t" style="left:203px;top:15px;">300k</div>
<div class="t" style="left:303px;top:15px;">3150k</div>
<div class="t r" style="left:-8px;top:30px;width:30px;">20</div>
<div class="t" style="left:27px;top:30px;">D</div>
<svg style="position:absolute;left:52px;top:31px" width="11" height="12"><rect x="1" y="1" width="9" height="10" fill="#33e633"/><path d="M3 1 H8" stroke="#000" stroke-width="1.2"/><path d="M1.2 1 V10" stroke="#000" stroke-width="1.3" stroke-dasharray="1.5 1.3"/><path d="M9.8 1 V10" stroke="#000" stroke-width="1.3" stroke-dasharray="1.5 1.3"/><path d="M0 10.8 H11" stroke="#000" stroke-width="1.6"/><path d="M2.5 4 H8.5 M2.5 7 H8.5" stroke="#1aa01a" stroke-width="0.8" opacity="0.7"/></svg>
<div class="t" style="left:65px;top:30px;">&lt;pppoe-riqu...</div>
<div class="t" style="left:135px;top:30px;">&lt;pppoe-riq...</div>
<div class="t" style="left:203px;top:30px;">300k</div>
<div class="t" style="left:303px;top:30px;">3150k</div>
<div class="t r" style="left:-8px;top:45px;width:30px;">19</div>
<div class="t" style="left:27px;top:45px;">D</div>
<svg style="position:absolute;left:52px;top:46px" width="11" height="12"><rect x="1" y="1" width="9" height="10" fill="#33e633"/><path d="M3 1 H8" stroke="#000" stroke-width="1.2"/><path d="M1.2 1 V10" stroke="#000" stroke-width="1.3" stroke-dasharray="1.5 1.3"/><path d="M9.8 1 V10" stroke="#000" stroke-width="1.3" stroke-dasharray="1.5 1.3"/><path d="M0 10.8 H11" stroke="#000" stroke-width="1.6"/><path d="M2.5 4 H8.5 M2.5 7 H8.5" stroke="#1aa01a" stroke-width="0.8" opacity="0.7"/></svg>
<div class="t" style="left:65px;top:45px;">&lt;pppoe-rob...</div>
<div class="t" style="left:135px;top:45px;">&lt;pppoe-rob...</div>
<div class="t" style="left:203px;top:45px;">300k</div>
<div class="t" style="left:303px;top:45px;">3150k</div>
<div class="t r" style="left:-8px;top:60px;width:30px;">15</div>
<div class="t" style="left:27px;top:60px;">D</div>
<svg style="position:absolute;left:52px;top:61px" width="11" height="12"><rect x="1" y="1" width="9" height="10" fill="#33e633"/><path d="M3 1 H8" stroke="#000" stroke-width="1.2"/><path d="M1.2 1 V10" stroke="#000" stroke-width="1.3" stroke-dasharray="1.5 1.3"/><path d="M9.8 1 V10" stroke="#000" stroke-width="1.3" stroke-dasharray="1.5 1.3"/><path d="M0 10.8 H11" stroke="#000" stroke-width="1.6"/><path d="M2.5 4 H8.5 M2.5 7 H8.5" stroke="#1aa01a" stroke-width="0.8" opacity="0.7"/></svg>
<div class="t" style="left:65px;top:60px;">&lt;pppoe-ros...</div>
<div class="t" style="left:135px;top:60px;">&lt;pppoe-ros...</div>
<div class="t" style="left:203px;top:60px;">300k</div>
<div class="t" style="left:303px;top:60px;">3150k</div>
<div class="t r" style="left:-8px;top:75px;width:30px;">4</div>
<div class="t" style="left:27px;top:75px;"></div>
<svg style="position:absolute;left:52px;top:76px" width="11" height="12"><rect x="1" y="1" width="9" height="10" fill="#33e633"/><path d="M3 1 H8" stroke="#000" stroke-width="1.2"/><path d="M1.2 1 V10" stroke="#000" stroke-width="1.3" stroke-dasharray="1.5 1.3"/><path d="M9.8 1 V10" stroke="#000" stroke-width="1.3" stroke-dasharray="1.5 1.3"/><path d="M0 10.8 H11" stroke="#000" stroke-width="1.6"/><path d="M2.5 4 H8.5 M2.5 7 H8.5" stroke="#1aa01a" stroke-width="0.8" opacity="0.7"/></svg>
<div class="t" style="left:65px;top:75px;">emerencia ...</div>
<div class="t" style="left:135px;top:75px;">100.110.12...</div>
<div class="t" style="left:203px;top:75px;">300k</div>
<div class="t" style="left:303px;top:75px;">3M</div>
<div class="t r" style="left:-8px;top:90px;width:30px;">3</div>
<div class="t" style="left:27px;top:90px;"></div>
<svg style="position:absolute;left:52px;top:91px" width="11" height="12"><rect x="1" y="1" width="9" height="10" fill="#33e633"/><path d="M3 1 H8" stroke="#000" stroke-width="1.2"/><path d="M1.2 1 V10" stroke="#000" stroke-width="1.3" stroke-dasharray="1.5 1.3"/><path d="M9.8 1 V10" stroke="#000" stroke-width="1.3" stroke-dasharray="1.5 1.3"/><path d="M0 10.8 H11" stroke="#000" stroke-width="1.6"/><path d="M2.5 4 H8.5 M2.5 7 H8.5" stroke="#1aa01a" stroke-width="0.8" opacity="0.7"/></svg>
<div class="t" style="left:65px;top:90px;">emerencia2</div>
<div class="t" style="left:135px;top:90px;">100.110.12...</div>
<div class="t" style="left:203px;top:90px;">300k</div>
<div class="t" style="left:303px;top:90px;">3M</div>
<div class="t r" style="left:-8px;top:105px;width:30px;color:#8c8c8c;">2</div>
<div class="t" style="left:27px;top:105px;color:#8c8c8c;">X</div>
<svg style="position:absolute;left:52px;top:106px" width="11" height="12"><rect x="1" y="1" width="9" height="10" fill="#f6f6f6"/><path d="M3 1 H8" stroke="#a0a0a0" stroke-width="1.2"/><path d="M1.2 1 V10" stroke="#a0a0a0" stroke-width="1.3" stroke-dasharray="1.5 1.3"/><path d="M9.8 1 V10" stroke="#a0a0a0" stroke-width="1.3" stroke-dasharray="1.5 1.3"/><path d="M0 10.8 H11" stroke="#a0a0a0" stroke-width="1.6"/><path d="M2.5 4 H8.5 M2.5 7 H8.5" stroke="#d0d0d0" stroke-width="0.8" opacity="0.7"/></svg>
<div class="t" style="left:65px;top:105px;color:#8c8c8c;">emergencia</div>
<div class="t" style="left:135px;top:105px;color:#8c8c8c;">100.110.12...</div>
<div class="t" style="left:203px;top:105px;color:#8c8c8c;">300k</div>
<div class="t" style="left:303px;top:105px;color:#8c8c8c;">3M</div>
<div class="t r" style="left:-8px;top:120px;width:30px;">23</div>
<div class="t" style="left:27px;top:120px;">D</div>
<svg style="position:absolute;left:52px;top:121px" width="11" height="12"><rect x="1" y="1" width="9" height="10" fill="#e82828"/><path d="M3 1 H8" stroke="#000" stroke-width="1.2"/><path d="M1.2 1 V10" stroke="#000" stroke-width="1.3" stroke-dasharray="1.5 1.3"/><path d="M9.8 1 V10" stroke="#000" stroke-width="1.3" stroke-dasharray="1.5 1.3"/><path d="M0 10.8 H11" stroke="#000" stroke-width="1.6"/><path d="M2.5 4 H8.5 M2.5 7 H8.5" stroke="#901010" stroke-width="0.8" opacity="0.7"/></svg>
<div class="t" style="left:65px;top:120px;">&lt;pppoe-Joa...</div>
<div class="t" style="left:135px;top:120px;">&lt;pppoe-Jo...</div>
<div class="t" style="left:203px;top:120px;">250k</div>
<div class="t" style="left:303px;top:120px;">2150k</div>
<div class="t r" style="left:-8px;top:135px;width:30px;">6</div>
<div class="t" style="left:27px;top:135px;">D</div>
<svg style="position:absolute;left:52px;top:136px" width="11" height="12"><rect x="1" y="1" width="9" height="10" fill="#f4e43a"/><path d="M3 1 H8" stroke="#000" stroke-width="1.2"/><path d="M1.2 1 V10" stroke="#000" stroke-width="1.3" stroke-dasharray="1.5 1.3"/><path d="M9.8 1 V10" stroke="#000" stroke-width="1.3" stroke-dasharray="1.5 1.3"/><path d="M0 10.8 H11" stroke="#000" stroke-width="1.6"/><path d="M2.5 4 H8.5 M2.5 7 H8.5" stroke="#a89a10" stroke-width="0.8" opacity="0.7"/></svg>
<div class="t" style="left:65px;top:135px;">&lt;pppoe-ale...</div>
<div class="t" style="left:135px;top:135px;">&lt;pppoe-ale...</div>
<div class="t" style="left:203px;top:135px;">250k</div>
<div class="t" style="left:303px;top:135px;">2150k</div>
<div class="t r" style="left:-8px;top:150px;width:30px;">37</div>
<div class="t" style="left:27px;top:150px;">D</div>
<svg style="position:absolute;left:52px;top:151px" width="11" height="12"><rect x="1" y="1" width="9" height="10" fill="#33e633"/><path d="M3 1 H8" stroke="#000" stroke-width="1.2"/><path d="M1.2 1 V10" stroke="#000" stroke-width="1.3" stroke-dasharray="1.5 1.3"/><path d="M9.8 1 V10" stroke="#000" stroke-width="1.3" stroke-dasharray="1.5 1.3"/><path d="M0 10.8 H11" stroke="#000" stroke-width="1.6"/><path d="M2.5 4 H8.5 M2.5 7 H8.5" stroke="#1aa01a" stroke-width="0.8" opacity="0.7"/></svg>
<div class="t" style="left:65px;top:150px;">&lt;pppoe-alin...</div>
<div class="t" style="left:135px;top:150px;">&lt;pppoe-ali...</div>
<div class="t" style="left:203px;top:150px;">250k</div>
<div class="t" style="left:303px;top:150px;">2150k</div>
<div class="t r" style="left:-8px;top:165px;width:30px;">38</div>
<div class="t" style="left:27px;top:165px;">D</div>
<svg style="position:absolute;left:52px;top:166px" width="11" height="12"><rect x="1" y="1" width="9" height="10" fill="#33e633"/><path d="M3 1 H8" stroke="#000" stroke-width="1.2"/><path d="M1.2 1 V10" stroke="#000" stroke-width="1.3" stroke-dasharray="1.5 1.3"/><path d="M9.8 1 V10" stroke="#000" stroke-width="1.3" stroke-dasharray="1.5 1.3"/><path d="M0 10.8 H11" stroke="#000" stroke-width="1.6"/><path d="M2.5 4 H8.5 M2.5 7 H8.5" stroke="#1aa01a" stroke-width="0.8" opacity="0.7"/></svg>
<div class="t" style="left:65px;top:165px;">&lt;pppoe-cas...</div>
<div class="t" style="left:135px;top:165px;">&lt;pppoe-ca...</div>
<div class="t" style="left:203px;top:165px;">250k</div>
<div class="t" style="left:303px;top:165px;">2150k</div>
<div class="t r" style="left:-8px;top:180px;width:30px;">12</div>
<div class="t" style="left:27px;top:180px;">D</div>
<svg style="position:absolute;left:52px;top:181px" width="11" height="12"><rect x="1" y="1" width="9" height="10" fill="#f4e43a"/><path d="M3 1 H8" stroke="#000" stroke-width="1.2"/><path d="M1.2 1 V10" stroke="#000" stroke-width="1.3" stroke-dasharray="1.5 1.3"/><path d="M9.8 1 V10" stroke="#000" stroke-width="1.3" stroke-dasharray="1.5 1.3"/><path d="M0 10.8 H11" stroke="#000" stroke-width="1.6"/><path d="M2.5 4 H8.5 M2.5 7 H8.5" stroke="#a89a10" stroke-width="0.8" opacity="0.7"/></svg>
<div class="t" style="left:65px;top:180px;">&lt;pppoe-ch...</div>
<div class="t" style="left:135px;top:180px;">&lt;pppoe-ch...</div>
<div class="t" style="left:203px;top:180px;">250k</div>
<div class="t" style="left:303px;top:180px;">2150k</div>
<div class="t r" style="left:-8px;top:195px;width:30px;">10</div>
<div class="t" style="left:27px;top:195px;">D</div>
<svg style="position:absolute;left:52px;top:196px" width="11" height="12"><rect x="1" y="1" width="9" height="10" fill="#33e633"/><path d="M3 1 H8" stroke="#000" stroke-width="1.2"/><path d="M1.2 1 V10" stroke="#000" stroke-width="1.3" stroke-dasharray="1.5 1.3"/><path d="M9.8 1 V10" stroke="#000" stroke-width="1.3" stroke-dasharray="1.5 1.3"/><path d="M0 10.8 H11" stroke="#000" stroke-width="1.6"/><path d="M2.5 4 H8.5 M2.5 7 H8.5" stroke="#1aa01a" stroke-width="0.8" opacity="0.7"/></svg>
<div class="t" style="left:65px;top:195px;">&lt;pppoe-da...</div>
<div class="t" style="left:135px;top:195px;">&lt;pppoe-da...</div>
<div class="t" style="left:203px;top:195px;">250k</div>
<div class="t" style="left:303px;top:195px;">2150k</div>
<div class="t r" style="left:-8px;top:210px;width:30px;">36</div>
<div class="t" style="left:27px;top:210px;">D</div>
<svg style="position:absolute;left:52px;top:211px" width="11" height="12"><rect x="1" y="1" width="9" height="10" fill="#33e633"/><path d="M3 1 H8" stroke="#000" stroke-width="1.2"/><path d="M1.2 1 V10" stroke="#000" stroke-width="1.3" stroke-dasharray="1.5 1.3"/><path d="M9.8 1 V10" stroke="#000" stroke-width="1.3" stroke-dasharray="1.5 1.3"/><path d="M0 10.8 H11" stroke="#000" stroke-width="1.6"/><path d="M2.5 4 H8.5 M2.5 7 H8.5" stroke="#1aa01a" stroke-width="0.8" opacity="0.7"/></svg>
<div class="t" style="left:65px;top:210px;">&lt;pppoe-da...</div>
<div class="t" style="left:135px;top:210px;">&lt;pppoe-da...</div>
<div class="t" style="left:203px;top:210px;">250k</div>
<div class="t" style="left:303px;top:210px;">2150k</div>
<div class="t r" style="left:-8px;top:225px;width:30px;">30</div>
<div class="t" style="left:27px;top:225px;">D</div>
<svg style="position:absolute;left:52px;top:226px" width="11" height="12"><rect x="1" y="1" width="9" height="10" fill="#33e633"/><path d="M3 1 H8" stroke="#000" stroke-width="1.2"/><path d="M1.2 1 V10" stroke="#000" stroke-width="1.3" stroke-dasharray="1.5 1.3"/><path d="M9.8 1 V10" stroke="#000" stroke-width="1.3" stroke-dasharray="1.5 1.3"/><path d="M0 10.8 H11" stroke="#000" stroke-width="1.6"/><path d="M2.5 4 H8.5 M2.5 7 H8.5" stroke="#1aa01a" stroke-width="0.8" opacity="0.7"/></svg>
<div class="t" style="left:65px;top:225px;">&lt;pppoe-joa...</div>
<div class="t" style="left:135px;top:225px;">&lt;pppoe-joa...</div>
<div class="t" style="left:203px;top:225px;">250k</div>
<div class="t" style="left:303px;top:225px;">2150k</div>
<div class="t r" style="left:-8px;top:240px;width:30px;">29</div>
<div class="t" style="left:27px;top:240px;">D</div>
<svg style="position:absolute;left:52px;top:241px" width="11" height="12"><rect x="1" y="1" width="9" height="10" fill="#33e633"/><path d="M3 1 H8" stroke="#000" stroke-width="1.2"/><path d="M1.2 1 V10" stroke="#000" stroke-width="1.3" stroke-dasharray="1.5 1.3"/><path d="M9.8 1 V10" stroke="#000" stroke-width="1.3" stroke-dasharray="1.5 1.3"/><path d="M0 10.8 H11" stroke="#000" stroke-width="1.6"/><path d="M2.5 4 H8.5 M2.5 7 H8.5" stroke="#1aa01a" stroke-width="0.8" opacity="0.7"/></svg>
<div class="t" style="left:65px;top:240px;">&lt;pppoe-jos...</div>
<div class="t" style="left:135px;top:240px;">&lt;pppoe-jos...</div>
<div class="t" style="left:203px;top:240px;">250k</div>
<div class="t" style="left:303px;top:240px;">2150k</div>
<div class="t r" style="left:-8px;top:255px;width:30px;">8</div>
<div class="t" style="left:27px;top:255px;">D</div>
<svg style="position:absolute;left:52px;top:256px" width="11" height="12"><rect x="1" y="1" width="9" height="10" fill="#33e633"/><path d="M3 1 H8" stroke="#000" stroke-width="1.2"/><path d="M1.2 1 V10" stroke="#000" stroke-width="1.3" stroke-dasharray="1.5 1.3"/><path d="M9.8 1 V10" stroke="#000" stroke-width="1.3" stroke-dasharray="1.5 1.3"/><path d="M0 10.8 H11" stroke="#000" stroke-width="1.6"/><path d="M2.5 4 H8.5 M2.5 7 H8.5" stroke="#1aa01a" stroke-width="0.8" opacity="0.7"/></svg>
<div class="t" style="left:65px;top:255px;">&lt;pppoe-juni...</div>
<div class="t" style="left:135px;top:255px;">&lt;pppoe-jun...</div>
<div class="t" style="left:203px;top:255px;">250k</div>
<div class="t" style="left:303px;top:255px;">2150k</div>
<div class="t r" style="left:-8px;top:270px;width:30px;">18</div>
<div class="t" style="left:27px;top:270px;">D</div>
<svg style="position:absolute;left:52px;top:271px" width="11" height="12"><rect x="1" y="1" width="9" height="10" fill="#33e633"/><path d="M3 1 H8" stroke="#000" stroke-width="1.2"/><path d="M1.2 1 V10" stroke="#000" stroke-width="1.3" stroke-dasharray="1.5 1.3"/><path d="M9.8 1 V10" stroke="#000" stroke-width="1.3" stroke-dasharray="1.5 1.3"/><path d="M0 10.8 H11" stroke="#000" stroke-width="1.6"/><path d="M2.5 4 H8.5 M2.5 7 H8.5" stroke="#1aa01a" stroke-width="0.8" opacity="0.7"/></svg>
<div class="t" style="left:65px;top:270px;">&lt;pppoe-mdt...</div>
<div class="t" style="left:135px;top:270px;">&lt;pppoe-md...</div>
<div class="t" style="left:203px;top:270px;">250k</div>
<div class="t" style="left:303px;top:270px;">2150k</div>
<div class="t r" style="left:-8px;top:285px;width:30px;">16</div>
<div class="t" style="left:27px;top:285px;">D</div>
<svg style="position:absolute;left:52px;top:286px" width="11" height="12"><rect x="1" y="1" width="9" height="10" fill="#33e633"/><path d="M3 1 H8" stroke="#000" stroke-width="1.2"/><path d="M1.2 1 V10" stroke="#000" stroke-width="1.3" stroke-dasharray="1.5 1.3"/><path d="M9.8 1 V10" stroke="#000" stroke-width="1.3" stroke-dasharray="1.5 1.3"/><path d="M0 10.8 H11" stroke="#000" stroke-width="1.6"/><path d="M2.5 4 H8.5 M2.5 7 H8.5" stroke="#1aa01a" stroke-width="0.8" opacity="0.7"/></svg>
<div class="t" style="left:65px;top:285px;">&lt;pppoe-miri...</div>
<div class="t" style="left:135px;top:285px;">&lt;pppoe-miri...</div>
<div class="t" style="left:203px;top:285px;">250k</div>
<div class="t" style="left:303px;top:285px;">2150k</div>
<div class="t r" style="left:-8px;top:300px;width:30px;">13</div>
<div class="t" style="left:27px;top:300px;">D</div>
<svg style="position:absolute;left:52px;top:301px" width="11" height="12"><rect x="1" y="1" width="9" height="10" fill="#33e633"/><path d="M3 1 H8" stroke="#000" stroke-width="1.2"/><path d="M1.2 1 V10" stroke="#000" stroke-width="1.3" stroke-dasharray="1.5 1.3"/><path d="M9.8 1 V10" stroke="#000" stroke-width="1.3" stroke-dasharray="1.5 1.3"/><path d="M0 10.8 H11" stroke="#000" stroke-width="1.6"/><path d="M2.5 4 H8.5 M2.5 7 H8.5" stroke="#1aa01a" stroke-width="0.8" opacity="0.7"/></svg>
<div class="t" style="left:65px;top:300px;">&lt;pppoe-ner...</div>
<div class="t" style="left:135px;top:300px;">&lt;pppoe-ner...</div>
<div class="t" style="left:203px;top:300px;">250k</div>
<div class="t" style="left:303px;top:300px;">2150k</div>
<div class="t r" style="left:-8px;top:315px;width:30px;">26</div>
<div class="t" style="left:27px;top:315px;">D</div>
<svg style="position:absolute;left:52px;top:316px" width="11" height="12"><rect x="1" y="1" width="9" height="10" fill="#33e633"/><path d="M3 1 H8" stroke="#000" stroke-width="1.2"/><path d="M1.2 1 V10" stroke="#000" stroke-width="1.3" stroke-dasharray="1.5 1.3"/><path d="M9.8 1 V10" stroke="#000" stroke-width="1.3" stroke-dasharray="1.5 1.3"/><path d="M0 10.8 H11" stroke="#000" stroke-width="1.6"/><path d="M2.5 4 H8.5 M2.5 7 H8.5" stroke="#1aa01a" stroke-width="0.8" opacity="0.7"/></svg>
<div class="t" style="left:65px;top:315px;">&lt;pppoe-pa...</div>
<div class="t" style="left:135px;top:315px;">&lt;pppoe-pa...</div>
<div class="t" style="left:203px;top:315px;">250k</div>
<div class="t" style="left:303px;top:315px;">2150k</div>
<div class="t r" style="left:-8px;top:330px;width:30px;">35</div>
<div class="t" style="left:27px;top:330px;">D</div>
<svg style="position:absolute;left:52px;top:331px" width="11" height="12"><rect x="1" y="1" width="9" height="10" fill="#f4e43a"/><path d="M3 1 H8" stroke="#000" stroke-width="1.2"/><path d="M1.2 1 V10" stroke="#000" stroke-width="1.3" stroke-dasharray="1.5 1.3"/><path d="M9.8 1 V10" stroke="#000" stroke-width="1.3" stroke-dasharray="1.5 1.3"/><path d="M0 10.8 H11" stroke="#000" stroke-width="1.6"/><path d="M2.5 4 H8.5 M2.5 7 H8.5" stroke="#a89a10" stroke-width="0.8" opacity="0.7"/></svg>
<div class="t" style="left:65px;top:330px;">&lt;pppoe-pla...</div>
<div class="t" style="left:135px;top:330px;">&lt;pppoe-pla...</div>
<div class="t" style="left:203px;top:330px;">250k</div>
<div class="t" style="left:303px;top:330px;">2150k</div>
<div class="t r" style="left:-8px;top:345px;width:30px;">33</div>
<div class="t" style="left:27px;top:345px;">D</div>
<svg style="position:absolute;left:52px;top:346px" width="11" height="12"><rect x="1" y="1" width="9" height="10" fill="#33e633"/><path d="M3 1 H8" stroke="#000" stroke-width="1.2"/><path d="M1.2 1 V10" stroke="#000" stroke-width="1.3" stroke-dasharray="1.5 1.3"/><path d="M9.8 1 V10" stroke="#000" stroke-width="1.3" stroke-dasharray="1.5 1.3"/><path d="M0 10.8 H11" stroke="#000" stroke-width="1.6"/><path d="M2.5 4 H8.5 M2.5 7 H8.5" stroke="#1aa01a" stroke-width="0.8" opacity="0.7"/></svg>
<div class="t" style="left:65px;top:345px;">&lt;pppoe-pla...</div>
<div class="t" style="left:135px;top:345px;">&lt;pppoe-pla...</div>
<div class="t" style="left:203px;top:345px;">250k</div>
<div class="t" style="left:303px;top:345px;">2150k</div>
<div class="t r" style="left:-8px;top:360px;width:30px;">34</div>
<div class="t" style="left:27px;top:360px;">D</div>
<svg style="position:absolute;left:52px;top:361px" width="11" height="12"><rect x="1" y="1" width="9" height="10" fill="#33e633"/><path d="M3 1 H8" stroke="#000" stroke-width="1.2"/><path d="M1.2 1 V10" stroke="#000" stroke-width="1.3" stroke-dasharray="1.5 1.3"/><path d="M9.8 1 V10" stroke="#000" stroke-width="1.3" stroke-dasharray="1.5 1.3"/><path d="M0 10.8 H11" stroke="#000" stroke-width="1.6"/><path d="M2.5 4 H8.5 M2.5 7 H8.5" stroke="#1aa01a" stroke-width="0.8" opacity="0.7"/></svg>
<div class="t" style="left:65px;top:360px;">&lt;pppoe-pq...</div>
<div class="t" style="left:135px;top:360px;">&lt;pppoe-pq...</div>
<div class="t" style="left:203px;top:360px;">250k</div>
<div class="t" style="left:303px;top:360px;">2150k</div>
<div class="t r" style="left:-8px;top:375px;width:30px;">25</div>
<div class="t" style="left:27px;top:375px;">D</div>
<svg style="position:absolute;left:52px;top:376px" width="11" height="12"><rect x="1" y="1" width="9" height="10" fill="#f4e43a"/><path d="M3 1 H8" stroke="#000" stroke-width="1.2"/><path d="M1.2 1 V10" stroke="#000" stroke-width="1.3" stroke-dasharray="1.5 1.3"/><path d="M9.8 1 V10" stroke="#000" stroke-width="1.3" stroke-dasharray="1.5 1.3"/><path d="M0 10.8 H11" stroke="#000" stroke-width="1.6"/><path d="M2.5 4 H8.5 M2.5 7 H8.5" stroke="#a89a10" stroke-width="0.8" opacity="0.7"/></svg>
<div class="t" style="left:65px;top:375px;">&lt;pppoe-raf...</div>
<div class="t" style="left:135px;top:375px;">&lt;pppoe-raf...</div>
<div class="t" style="left:203px;top:375px;">250k</div>
<div class="t" style="left:303px;top:375px;">2150k</div>
<div class="t r" style="left:-8px;top:390px;width:30px;">7</div>
<div class="t" style="left:27px;top:390px;">D</div>
<svg style="position:absolute;left:52px;top:391px" width="11" height="12"><rect x="1" y="1" width="9" height="10" fill="#33e633"/><path d="M3 1 H8" stroke="#000" stroke-width="1.2"/><path d="M1.2 1 V10" stroke="#000" stroke-width="1.3" stroke-dasharray="1.5 1.3"/><path d="M9.8 1 V10" stroke="#000" stroke-width="1.3" stroke-dasharray="1.5 1.3"/><path d="M0 10.8 H11" stroke="#000" stroke-width="1.6"/><path d="M2.5 4 H8.5 M2.5 7 H8.5" stroke="#1aa01a" stroke-width="0.8" opacity="0.7"/></svg>
<div class="t" style="left:65px;top:390px;">&lt;pppoe-val...</div>
<div class="t" style="left:135px;top:390px;">&lt;pppoe-val...</div>
<div class="t" style="left:203px;top:390px;">250k</div>
<div class="t" style="left:303px;top:390px;">2150k</div>
<div class="t r" style="left:-8px;top:405px;width:30px;">21</div>
<div class="t" style="left:27px;top:405px;">D</div>
<svg style="position:absolute;left:52px;top:406px" width="11" height="12"><rect x="1" y="1" width="9" height="10" fill="#33e633"/><path d="M3 1 H8" stroke="#000" stroke-width="1.2"/><path d="M1.2 1 V10" stroke="#000" stroke-width="1.3" stroke-dasharray="1.5 1.3"/><path d="M9.8 1 V10" stroke="#000" stroke-width="1.3" stroke-dasharray="1.5 1.3"/><path d="M0 10.8 H11" stroke="#000" stroke-width="1.6"/><path d="M2.5 4 H8.5 M2.5 7 H8.5" stroke="#1aa01a" stroke-width="0.8" opacity="0.7"/></svg>
<div class="t" style="left:65px;top:405px;">&lt;pppoe-va...</div>
<div class="t" style="left:135px;top:405px;">&lt;pppoe-va...</div>
<div class="t" style="left:203px;top:405px;">250k</div>
<div class="t" style="left:303px;top:405px;">2150k</div>
<div class="t r" style="left:-8px;top:420px;width:30px;">24</div>
<div class="t" style="left:27px;top:420px;">D</div>
<svg style="position:absolute;left:52px;top:421px" width="11" height="12"><rect x="1" y="1" width="9" height="10" fill="#33e633"/><path d="M3 1 H8" stroke="#000" stroke-width="1.2"/><path d="M1.2 1 V10" stroke="#000" stroke-width="1.3" stroke-dasharray="1.5 1.3"/><path d="M9.8 1 V10" stroke="#000" stroke-width="1.3" stroke-dasharray="1.5 1.3"/><path d="M0 10.8 H11" stroke="#000" stroke-width="1.6"/><path d="M2.5 4 H8.5 M2.5 7 H8.5" stroke="#1aa01a" stroke-width="0.8" opacity="0.7"/></svg>
<div class="t" style="left:65px;top:420px;">&lt;pppoe-var...</div>
<div class="t" style="left:135px;top:420px;">&lt;pppoe-var...</div>
<div class="t" style="left:203px;top:420px;">250k</div>
<div class="t" style="left:303px;top:420px;">2150k</div>
<div class="t r" style="left:-8px;top:435px;width:30px;">27</div>
<div class="t" style="left:27px;top:435px;">D</div>
<svg style="position:absolute;left:52px;top:436px" width="11" height="12"><rect x="1" y="1" width="9" height="10" fill="#33e633"/><path d="M3 1 H8" stroke="#000" stroke-width="1.2"/><path d="M1.2 1 V10" stroke="#000" stroke-width="1.3" stroke-dasharray="1.5 1.3"/><path d="M9.8 1 V10" stroke="#000" stroke-width="1.3" stroke-dasharray="1.5 1.3"/><path d="M0 10.8 H11" stroke="#000" stroke-width="1.6"/><path d="M2.5 4 H8.5 M2.5 7 H8.5" stroke="#1aa01a" stroke-width="0.8" opacity="0.7"/></svg>
<div class="t" style="left:65px;top:435px;">&lt;pppoe-zete&gt;</div>
<div class="t" style="left:135px;top:435px;">&lt;pppoe-zet...</div>
<div class="t" style="left:203px;top:435px;">250k</div>
<div class="t" style="left:303px;top:435px;">2150k</div>
<div class="t r" style="left:-8px;top:450px;width:30px;">39</div>
<div class="t" style="left:27px;top:450px;">D</div>
<svg style="position:absolute;left:52px;top:451px" width="11" height="12"><rect x="1" y="1" width="9" height="10" fill="#33e633"/><path d="M3 1 H8" stroke="#000" stroke-width="1.2"/><path d="M1.2 1 V10" stroke="#000" stroke-width="1.3" stroke-dasharray="1.5 1.3"/><path d="M9.8 1 V10" stroke="#000" stroke-width="1.3" stroke-dasharray="1.5 1.3"/><path d="M0 10.8 H11" stroke="#000" stroke-width="1.6"/><path d="M2.5 4 H8.5 M2.5 7 H8.5" stroke="#1aa01a" stroke-width="0.8" opacity="0.7"/></svg>
<div class="t" style="left:65px;top:450px;">&lt;pppoe-adil...</div>
<div class="t" style="left:135px;top:450px;">&lt;pppoe-adi...</div>
<div class="t" style="left:203px;top:450px;">250k</div>
<div class="t" style="left:303px;top:450px;">2150k</div>
<div class="t r" style="left:-8px;top:465px;width:30px;">28</div>
<div class="t" style="left:27px;top:465px;">D</div>
<svg style="position:absolute;left:52px;top:466px" width="11" height="12"><rect x="1" y="1" width="9" height="10" fill="#33e633"/><path d="M3 1 H8" stroke="#000" stroke-width="1.2"/><path d="M1.2 1 V10" stroke="#000" stroke-width="1.3" stroke-dasharray="1.5 1.3"/><path d="M9.8 1 V10" stroke="#000" stroke-width="1.3" stroke-dasharray="1.5 1.3"/><path d="M0 10.8 H11" stroke="#000" stroke-width="1.6"/><path d="M2.5 4 H8.5 M2.5 7 H8.5" stroke="#1aa01a" stroke-width="0.8" opacity="0.7"/></svg>
<div class="t" style="left:65px;top:465px;">&lt;pppoe-carl...</div>
<div class="t" style="left:135px;top:465px;">&lt;pppoe-car...</div>
<div class="t" style="left:203px;top:465px;">250k</div>
<div class="t" style="left:303px;top:465px;">2150k</div>
<div class="t r" style="left:-8px;top:480px;width:30px;">9</div>
<div class="t" style="left:27px;top:480px;">D</div>
<svg style="position:absolute;left:52px;top:481px" width="11" height="12"><rect x="1" y="1" width="9" height="10" fill="#e82828"/><path d="M3 1 H8" stroke="#000" stroke-width="1.2"/><path d="M1.2 1 V10" stroke="#000" stroke-width="1.3" stroke-dasharray="1.5 1.3"/><path d="M9.8 1 V10" stroke="#000" stroke-width="1.3" stroke-dasharray="1.5 1.3"/><path d="M0 10.8 H11" stroke="#000" stroke-width="1.6"/><path d="M2.5 4 H8.5 M2.5 7 H8.5" stroke="#901010" stroke-width="0.8" opacity="0.7"/></svg>
<div class="t" style="left:65px;top:480px;">&lt;pppoe-carl...</div>
<div class="t" style="left:135px;top:480px;">&lt;pppoe-car...</div>
<div class="t" style="left:203px;top:480px;">250k</div>
<div class="t" style="left:303px;top:480px;">2150k</div></div>
<div class="t" style="left:1026px;top:133px;">#</div>
<div style="left:1041px;top:132px;width:1px;height:16px;background:#a0a0a0"></div>
<div class="t" style="left:1066px;top:133px;">Name</div>
<div style="left:1063px;top:132px;width:1px;height:16px;background:#a0a0a0"></div>
<div class="t" style="left:1152px;top:133px;">Target</div>
<div style="left:1149px;top:132px;width:1px;height:16px;background:#a0a0a0"></div>
<div class="t" style="left:1220px;top:133px;">Upload Max Limit</div>
<div style="left:1217px;top:132px;width:1px;height:16px;background:#a0a0a0"></div>
<div class="t" style="left:1320px;top:133px;">Download Max ...</div>
<div style="left:1317px;top:132px;width:1px;height:16px;background:#a0a0a0"></div>
<div class="t" style="left:1424px;top:133px;">Packet Marks</div>
<div style="left:1421px;top:132px;width:1px;height:16px;background:#a0a0a0"></div>
<div class="t" style="left:1524px;top:133px;">Total Max Limit (bi...</div>
<div style="left:1521px;top:132px;width:1px;height:16px;background:#a0a0a0"></div>
<div style="left:1621px;top:132px;width:1px;height:16px;background:#a0a0a0"></div>
<svg style="position:absolute;left:1137px;top:136px" width="8" height="7" viewBox="0 0 8 7"><path d="M4 0.5 L7.5 6.5 H0.5 Z" fill="none" stroke="#c8c8c8"/></svg>
<svg style="position:absolute;left:1410px;top:136px" width="8" height="7" viewBox="0 0 8 7"><path d="M0.5 0.5 H7.5 L4 6.5 Z" fill="none" stroke="#808080"/></svg>
<div style="left:1017px;top:131px;width:1px;height:502px;background:#a0a0a0"></div>
<div style="left:1017px;top:633px;width:808px;height:1px;background:#a0a0a0"></div>
<div style="left:1808px;top:131px;width:17px;height:502px;background:#f0f0f0;border-left:1px solid #d8d8d8"></div>
<div style="left:1808px;top:131px;width:17px;height:18px;background:#f0f0f0;border:1px solid #a0a0a0"></div>
<svg style="position:absolute;left:1812px;top:137px" width="10" height="6" viewBox="0 0 10 6"><path d="M0 0 H10 L5 6 Z" fill="#000"/></svg>
<div style="left:1808px;top:149px;width:17px;height:15px;background:#f0f0f0;border-left:1px solid #d0d0d0;border-bottom:1px solid #d0d0d0"></div>
<svg style="position:absolute;left:1812px;top:152px" width="9" height="8" viewBox="0 0 9 8"><path d="M4.5 0 L9 4.5 H6.5 V8 H2.5 V4.5 H0 Z" fill="#000"/></svg>
<div style="left:1809px;top:164px;width:15px;height:79px;background:#cdcdcd"></div>
<div style="left:1809px;top:605px;width:15px;height:12px;background:#cdcdcd"></div>
<div style="left:1808px;top:617px;width:17px;height:16px;background:#f0f0f0;border-left:1px solid #d0d0d0;border-top:1px solid #d0d0d0"></div>
<svg style="position:absolute;left:1812px;top:621px" width="9" height="8" viewBox="0 0 9 8"><path d="M2.5 0 H6.5 V3.5 H9 L4.5 8 L0 3.5 H2.5 Z" fill="#000"/></svg>
<div style="left:1017px;top:634px;width:808px;height:21px;border-left:1px solid #a0a0a0;border-bottom:1px solid #a0a0a0"></div>
<div style="left:1210px;top:636px;width:1px;height:17px;background:#a0a0a0"></div>
<div class="t" style="left:1020px;top:637px;font-size:11.5px;letter-spacing:-0.4px">40 items</div>
<div class="t" style="left:1213px;top:637px;font-size:11.5px;letter-spacing:-0.3px">0 B</div><div style="left:1225px;top:533px;width:415px;height:472px;background:#f0f0f0;border:1px solid #000;border-right-width:2px;border-bottom-width:2px"></div>
<div style="left:1226px;top:534px;width:412px;height:1px;background:#8c8ce4"></div>
<div style="left:1226px;top:534px;width:1px;height:22px;background:#8c8ce4"></div>
<div style="left:1227px;top:535px;width:411px;height:21px;background:#4a4ad0"></div>
<div class="t" style="left:1231px;top:540px;color:#f5f5f5;font-size:11.5px;letter-spacing:-0.3px">Interface &lt;internet&gt;</div>
<div style="left:1604px;top:539px;width:14px;height:14px;background:#f0f0f0;border:1px solid #222"></div>
<div style="left:1606px;top:542px;width:9px;height:8px;border:1px solid #333;border-top-width:2px"></div>
<div style="left:1621px;top:539px;width:14px;height:14px;background:#f0f0f0;border:1px solid #222"></div>
<svg style="position:absolute;left:1623px;top:541px" width="9" height="9" viewBox="0 0 9 9"><path d="M1 1 L8 8 M8 1 L1 8" stroke="#222" stroke-width="2.2"/></svg>
<div style="left:1231px;top:580px;width:310px;height:398px;border-top:1px solid #fff;border-left:1px solid #fff;border-right:1px solid #a0a0a0;border-bottom:1px solid #a0a0a0"></div>
<div style="left:1231px;top:560px;width:46px;height:20px;background:#d4d4d4;border-right:1px solid #f4f4f4"></div>
<div class="t" style="left:1231px;top:564px;width:47px;text-align:center;font-size:11.5px;letter-spacing:-0.3px">General</div>
<div style="left:1278px;top:560px;width:49px;height:20px;background:#d4d4d4;border-right:1px solid #f4f4f4"></div>
<div class="t" style="left:1278px;top:564px;width:50px;text-align:center;font-size:11.5px;letter-spacing:-0.3px">Dial Out</div>
<div style="left:1328px;top:560px;width:40px;height:20px;background:#d4d4d4;border-right:1px solid #f4f4f4"></div>
<div class="t" style="left:1328px;top:564px;width:41px;text-align:center;font-size:11.5px;letter-spacing:-0.3px">Status</div>
<div style="left:1369px;top:558px;width:46px;height:22px;background:#f0f0f0;border-right:1px solid #c8c8c8"></div>
<div class="t" style="left:1369px;top:562px;width:46px;text-align:center;font-size:11.5px;letter-spacing:-0.3px">Traffic</div>
<div style="left:1414px;top:558px;width:1px;height:22px;background:#b8b8b8"></div>
<div class="t r" style="left:1212px;top:590px;width:120px;font-size:11.5px;letter-spacing:-0.3px;line-height:17px;height:17px">Tx/Rx Rate:</div>
<div style="left:1339px;top:589px;width:91px;height:17px;background:#f0f0f0;border:1px solid #a8a8a8"></div>
<div class="t" style="left:1342px;top:591px;font-size:11.5px;letter-spacing:-0.3px;line-height:15px">663.3 kbps</div>
<div class="t" style="left:1433px;top:590px;font-size:11.5px;line-height:17px;color:#555">/</div>
<div style="left:1441px;top:589px;width:91px;height:17px;background:#f0f0f0;border:1px solid #a8a8a8"></div>
<div class="t" style="left:1444px;top:591px;font-size:11.5px;letter-spacing:-0.3px;line-height:15px">10.8 Mbps</div>
<div class="t r" style="left:1212px;top:615px;width:120px;font-size:11.5px;letter-spacing:-0.3px;line-height:17px;height:17px">Tx/Rx Packet Rate:</div>
<div style="left:1339px;top:614px;width:91px;height:17px;background:#f0f0f0;border:1px solid #a8a8a8"></div>
<div class="t" style="left:1342px;top:616px;font-size:11.5px;letter-spacing:-0.3px;line-height:15px">895 p/s</div>
<div class="t" style="left:1433px;top:615px;font-size:11.5px;line-height:17px;color:#555">/</div>
<div style="left:1441px;top:614px;width:91px;height:17px;background:#f0f0f0;border:1px solid #a8a8a8"></div>
<div class="t" style="left:1444px;top:616px;font-size:11.5px;letter-spacing:-0.3px;line-height:15px">1 156 p/s</div>
<div class="t r" style="left:1212px;top:640px;width:120px;font-size:11.5px;letter-spacing:-0.3px;line-height:17px;height:17px">Tx/Rx Bytes:</div>
<div style="left:1339px;top:639px;width:91px;height:17px;background:#f0f0f0;border:1px solid #a8a8a8"></div>
<div class="t" style="left:1342px;top:641px;font-size:11.5px;letter-spacing:-0.3px;line-height:15px">35.9 GiB</div>
<div class="t" style="left:1433px;top:640px;font-size:11.5px;line-height:17px;color:#555">/</div>
<div style="left:1441px;top:639px;width:91px;height:17px;background:#f0f0f0;border:1px solid #a8a8a8"></div>
<div class="t" style="left:1444px;top:641px;font-size:11.5px;letter-spacing:-0.3px;line-height:15px">579.3 GiB</div>
<div class="t r" style="left:1212px;top:665px;width:120px;font-size:11.5px;letter-spacing:-0.3px;line-height:17px;height:17px">Tx/Rx Packets:</div>
<div style="left:1339px;top:664px;width:91px;height:17px;background:#f0f0f0;border:1px solid #a8a8a8"></div>
<div class="t" style="left:1342px;top:666px;font-size:11.5px;letter-spacing:-0.3px;line-height:15px">348 865 289</div>
<div class="t" style="left:1433px;top:665px;font-size:11.5px;line-height:17px;color:#555">/</div>
<div style="left:1441px;top:664px;width:91px;height:17px;background:#f0f0f0;border:1px solid #a8a8a8"></div>
<div class="t" style="left:1444px;top:666px;font-size:11.5px;letter-spacing:-0.3px;line-height:15px">503 899 209</div>
<div class="t r" style="left:1212px;top:690px;width:120px;font-size:11.5px;letter-spacing:-0.3px;line-height:17px;height:17px">Tx/Rx Drops:</div>
<div style="left:1339px;top:689px;width:91px;height:17px;background:#f0f0f0;border:1px solid #a8a8a8"></div>
<div class="t" style="left:1342px;top:691px;font-size:11.5px;letter-spacing:-0.3px;line-height:15px">0</div>
<div class="t" style="left:1433px;top:690px;font-size:11.5px;line-height:17px;color:#555">/</div>
<div style="left:1441px;top:689px;width:91px;height:17px;background:#f0f0f0;border:1px solid #a8a8a8"></div>
<div class="t" style="left:1444px;top:691px;font-size:11.5px;letter-spacing:-0.3px;line-height:15px">0</div>
<div class="t r" style="left:1212px;top:715px;width:120px;font-size:11.5px;letter-spacing:-0.3px;line-height:17px;height:17px">Tx/Rx Errors:</div>
<div style="left:1339px;top:714px;width:91px;height:17px;background:#f0f0f0;border:1px solid #a8a8a8"></div>
<div class="t" style="left:1342px;top:716px;font-size:11.5px;letter-spacing:-0.3px;line-height:15px">0</div>
<div class="t" style="left:1433px;top:715px;font-size:11.5px;line-height:17px;color:#555">/</div>
<div style="left:1441px;top:714px;width:91px;height:17px;background:#f0f0f0;border:1px solid #a8a8a8"></div>
<div class="t" style="left:1444px;top:716px;font-size:11.5px;letter-spacing:-0.3px;line-height:15px">0</div>
<div style="left:1551px;top:561px;width:81px;height:23px;background:#f0f0f0;border:1px solid #000"></div>
<div style="left:1553px;top:563px;width:77px;height:19px;border:1px dotted #000"></div>
<div class="t" style="left:1551px;top:566px;width:81px;text-align:center;font-size:11.5px;letter-spacing:-0.3px">OK</div>
<div style="left:1551px;top:587px;width:81px;height:23px;background:#f0f0f0;border:1px solid #adadad"></div>
<div class="t" style="left:1551px;top:592px;width:81px;text-align:center;font-size:11.5px;letter-spacing:-0.3px">Cancel</div>
<div style="left:1551px;top:613px;width:81px;height:23px;background:#f0f0f0;border:1px solid #adadad"></div>
<div class="t" style="left:1551px;top:618px;width:81px;text-align:center;font-size:11.5px;letter-spacing:-0.3px">Apply</div>
<div style="left:1551px;top:645px;width:81px;height:23px;background:#f0f0f0;border:1px solid #adadad"></div>
<div class="t" style="left:1551px;top:650px;width:81px;text-align:center;font-size:11.5px;letter-spacing:-0.3px">Disable</div>
<div style="left:1551px;top:671px;width:81px;height:23px;background:#f0f0f0;border:1px solid #adadad"></div>
<div class="t" style="left:1551px;top:676px;width:81px;text-align:center;font-size:11.5px;letter-spacing:-0.3px">Comment</div>
<div style="left:1551px;top:697px;width:81px;height:23px;background:#f0f0f0;border:1px solid #adadad"></div>
<div class="t" style="left:1551px;top:702px;width:81px;text-align:center;font-size:11.5px;letter-spacing:-0.3px">Copy</div>
<div style="left:1551px;top:723px;width:81px;height:23px;background:#f0f0f0;border:1px solid #adadad"></div>
<div class="t" style="left:1551px;top:728px;width:81px;text-align:center;font-size:11.5px;letter-spacing:-0.3px">Remove</div>
<div style="left:1551px;top:755px;width:81px;height:23px;background:#f0f0f0;border:1px solid #adadad"></div>
<div class="t" style="left:1551px;top:760px;width:81px;text-align:center;font-size:11.5px;letter-spacing:-0.3px">Torch</div>
<div style="left:1551px;top:781px;width:81px;height:23px;background:#f0f0f0;border:1px solid #adadad"></div>
<div class="t" style="left:1551px;top:786px;width:81px;text-align:center;font-size:11.5px;letter-spacing:-0.3px">PPPoE Scan</div>
<div style="left:1237px;top:739px;width:295px;height:111px;background-color:#fff;border-top:2px solid #a8a8a8;border-left:2px solid #a8a8a8;background-image:linear-gradient(90deg,#d2d2d2 1px,transparent 1px),linear-gradient(#d2d2d2 1px,transparent 1px);background-size:15px 15px;background-position:7px 0,0 3px"></div>
<div style="left:1449px;top:783px;width:1px;height:66px;background:#b83030"></div><div style="left:1448px;top:844px;width:2px;height:5px;background:#380070"></div><div style="left:1452px;top:781px;width:1px;height:68px;background:#b83030"></div><div style="left:1451px;top:845px;width:2px;height:4px;background:#380070"></div><div style="left:1455px;top:789px;width:1px;height:60px;background:#b83030"></div><div style="left:1454px;top:845px;width:2px;height:4px;background:#380070"></div><div style="left:1458px;top:787px;width:1px;height:62px;background:#b83030"></div><div style="left:1457px;top:844px;width:2px;height:5px;background:#380070"></div><div style="left:1461px;top:793px;width:1px;height:56px;background:#b83030"></div><div style="left:1460px;top:845px;width:2px;height:4px;background:#380070"></div><div style="left:1464px;top:793px;width:1px;height:56px;background:#b83030"></div><div style="left:1463px;top:845px;width:2px;height:4px;background:#380070"></div><div style="left:1467px;top:787px;width:1px;height:62px;background:#b83030"></div><div style="left:1466px;top:844px;width:2px;height:5px;background:#380070"></div><div style="left:1470px;top:781px;width:1px;height:68px;background:#b83030"></div><div style="left:1469px;top:845px;width:2px;height:4px;background:#380070"></div><div style="left:1473px;top:780px;width:1px;height:69px;background:#b83030"></div><div style="left:1472px;top:845px;width:2px;height:4px;background:#380070"></div><div style="left:1476px;top:787px;width:1px;height:62px;background:#b83030"></div><div style="left:1475px;top:844px;width:2px;height:5px;background:#380070"></div><div style="left:1479px;top:790px;width:1px;height:59px;background:#b83030"></div><div style="left:1478px;top:845px;width:2px;height:4px;background:#380070"></div><div style="left:1482px;top:760px;width:1px;height:89px;background:#b83030"></div><div style="left:1481px;top:845px;width:2px;height:4px;background:#380070"></div><div style="left:1485px;top:783px;width:1px;height:66px;background:#b83030"></div><div style="left:1484px;top:844px;width:2px;height:5px;background:#380070"></div><div style="left:1488px;top:779px;width:1px;height:70px;background:#b83030"></div><div style="left:1487px;top:845px;width:2px;height:4px;background:#380070"></div><div style="left:1491px;top:786px;width:1px;height:63px;background:#b83030"></div><div style="left:1490px;top:845px;width:2px;height:4px;background:#380070"></div><div style="left:1494px;top:791px;width:1px;height:58px;background:#b83030"></div><div style="left:1493px;top:844px;width:2px;height:5px;background:#380070"></div><div style="left:1497px;top:787px;width:1px;height:62px;background:#b83030"></div><div style="left:1496px;top:845px;width:2px;height:4px;background:#380070"></div><div style="left:1500px;top:776px;width:1px;height:73px;background:#b83030"></div><div style="left:1499px;top:845px;width:2px;height:4px;background:#380070"></div><div style="left:1503px;top:789px;width:1px;height:60px;background:#b83030"></div><div style="left:1502px;top:844px;width:2px;height:5px;background:#380070"></div><div style="left:1506px;top:791px;width:1px;height:58px;background:#b83030"></div><div style="left:1505px;top:845px;width:2px;height:4px;background:#380070"></div><div style="left:1509px;top:795px;width:1px;height:54px;background:#b83030"></div><div style="left:1508px;top:845px;width:2px;height:4px;background:#380070"></div><div style="left:1512px;top:786px;width:1px;height:63px;background:#b83030"></div><div style="left:1511px;top:844px;width:2px;height:5px;background:#380070"></div><div style="left:1515px;top:781px;width:1px;height:68px;background:#b83030"></div><div style="left:1514px;top:845px;width:2px;height:4px;background:#380070"></div><div style="left:1518px;top:790px;width:1px;height:59px;background:#b83030"></div><div style="left:1517px;top:845px;width:2px;height:4px;background:#380070"></div><div style="left:1521px;top:778px;width:1px;height:71px;background:#b83030"></div><div style="left:1520px;top:844px;width:2px;height:5px;background:#380070"></div><div style="left:1524px;top:798px;width:1px;height:51px;background:#b83030"></div><div style="left:1523px;top:845px;width:2px;height:4px;background:#380070"></div><div style="left:1527px;top:785px;width:1px;height:64px;background:#b83030"></div><div style="left:1526px;top:845px;width:2px;height:4px;background:#380070"></div><div style="left:1530px;top:779px;width:1px;height:70px;background:#b83030"></div><div style="left:1529px;top:844px;width:2px;height:5px;background:#380070"></div>
<div style="left:1237px;top:857px;width:295px;height:111px;background-color:#fff;border-top:2px solid #a8a8a8;border-left:2px solid #a8a8a8;background-image:linear-gradient(90deg,#d2d2d2 1px,transparent 1px),linear-gradient(#d2d2d2 1px,transparent 1px);background-size:15px 15px;background-position:7px 0,0 4px"></div>
<div style="left:1449px;top:915px;width:1px;height:53px;background:#b83030"></div><div style="left:1448px;top:932px;width:2px;height:36px;background:#4a0a9a"></div><div style="left:1452px;top:914px;width:1px;height:54px;background:#b83030"></div><div style="left:1451px;top:934px;width:2px;height:34px;background:#4a0a9a"></div><div style="left:1455px;top:920px;width:1px;height:48px;background:#b83030"></div><div style="left:1454px;top:932px;width:2px;height:36px;background:#4a0a9a"></div><div style="left:1458px;top:917px;width:1px;height:51px;background:#b83030"></div><div style="left:1457px;top:932px;width:2px;height:36px;background:#4a0a9a"></div><div style="left:1461px;top:924px;width:1px;height:44px;background:#b83030"></div><div style="left:1460px;top:938px;width:2px;height:30px;background:#4a0a9a"></div><div style="left:1464px;top:923px;width:1px;height:45px;background:#b83030"></div><div style="left:1463px;top:942px;width:2px;height:26px;background:#4a0a9a"></div><div style="left:1467px;top:918px;width:1px;height:50px;background:#b83030"></div><div style="left:1466px;top:932px;width:2px;height:36px;background:#4a0a9a"></div><div style="left:1470px;top:907px;width:1px;height:61px;background:#b83030"></div><div style="left:1469px;top:927px;width:2px;height:41px;background:#4a0a9a"></div><div style="left:1473px;top:908px;width:1px;height:60px;background:#b83030"></div><div style="left:1472px;top:921px;width:2px;height:47px;background:#4a0a9a"></div><div style="left:1476px;top:917px;width:1px;height:51px;background:#b83030"></div><div style="left:1475px;top:935px;width:2px;height:33px;background:#4a0a9a"></div><div style="left:1479px;top:919px;width:1px;height:49px;background:#b83030"></div><div style="left:1478px;top:939px;width:2px;height:29px;background:#4a0a9a"></div><div style="left:1482px;top:897px;width:1px;height:71px;background:#b83030"></div><div style="left:1481px;top:923px;width:2px;height:45px;background:#4a0a9a"></div><div style="left:1485px;top:914px;width:1px;height:54px;background:#b83030"></div><div style="left:1484px;top:931px;width:2px;height:37px;background:#4a0a9a"></div><div style="left:1488px;top:912px;width:1px;height:56px;background:#b83030"></div><div style="left:1487px;top:929px;width:2px;height:39px;background:#4a0a9a"></div><div style="left:1491px;top:918px;width:1px;height:50px;background:#b83030"></div><div style="left:1490px;top:926px;width:2px;height:42px;background:#4a0a9a"></div><div style="left:1494px;top:920px;width:1px;height:48px;background:#b83030"></div><div style="left:1493px;top:937px;width:2px;height:31px;background:#4a0a9a"></div><div style="left:1497px;top:915px;width:1px;height:53px;background:#b83030"></div><div style="left:1496px;top:929px;width:2px;height:39px;background:#4a0a9a"></div><div style="left:1500px;top:910px;width:1px;height:58px;background:#b83030"></div><div style="left:1499px;top:926px;width:2px;height:42px;background:#4a0a9a"></div><div style="left:1503px;top:918px;width:1px;height:50px;background:#b83030"></div><div style="left:1502px;top:929px;width:2px;height:39px;background:#4a0a9a"></div><div style="left:1506px;top:919px;width:1px;height:49px;background:#b83030"></div><div style="left:1505px;top:938px;width:2px;height:30px;background:#4a0a9a"></div><div style="left:1509px;top:924px;width:1px;height:44px;background:#b83030"></div><div style="left:1508px;top:936px;width:2px;height:32px;background:#4a0a9a"></div><div style="left:1512px;top:915px;width:1px;height:53px;background:#b83030"></div><div style="left:1511px;top:929px;width:2px;height:39px;background:#4a0a9a"></div><div style="left:1515px;top:911px;width:1px;height:57px;background:#b83030"></div><div style="left:1514px;top:926px;width:2px;height:42px;background:#4a0a9a"></div><div style="left:1518px;top:918px;width:1px;height:50px;background:#b83030"></div><div style="left:1517px;top:933px;width:2px;height:35px;background:#4a0a9a"></div><div style="left:1521px;top:910px;width:1px;height:58px;background:#b83030"></div><div style="left:1520px;top:935px;width:2px;height:33px;background:#4a0a9a"></div><div style="left:1524px;top:927px;width:1px;height:41px;background:#b83030"></div><div style="left:1523px;top:943px;width:2px;height:25px;background:#4a0a9a"></div><div style="left:1527px;top:913px;width:1px;height:55px;background:#b83030"></div><div style="left:1526px;top:930px;width:2px;height:38px;background:#4a0a9a"></div><div style="left:1530px;top:907px;width:1px;height:61px;background:#b83030"></div><div style="left:1529px;top:921px;width:2px;height:47px;background:#4a0a9a"></div>
<div style="left:1240px;top:808px;width:100px;height:38px;background:#fff;border:1px solid #606060"></div>
<div style="left:1243px;top:812px;width:13px;height:13px;background:#0000f0;border:1px solid #000"></div>
<div style="left:1243px;top:828px;width:13px;height:13px;background:#f00000;border:1px solid #000"></div>
<div class="t" style="left:1259px;top:811px;font-size:11.5px;letter-spacing:-0.3px">Tx:  663.3 kbps</div>
<div class="t" style="left:1259px;top:827px;font-size:11.5px;letter-spacing:-0.3px">Rx:  10.8 Mbps</div>
<div style="left:1240px;top:927px;width:131px;height:38px;background:#fff;border:1px solid #606060"></div>
<div style="left:1243px;top:931px;width:13px;height:13px;background:#0000f0;border:1px solid #000"></div>
<div style="left:1243px;top:947px;width:13px;height:13px;background:#f00000;border:1px solid #000"></div>
<div class="t" style="left:1259px;top:930px;font-size:11.5px;letter-spacing:-0.3px">Tx Packet:  895 p/s</div>
<div class="t" style="left:1259px;top:946px;font-size:11.5px;letter-spacing:-0.3px">Rx Packet:  1 156 p/s</div>
<div style="left:1229px;top:981px;width:93px;height:19px;border-left:1px solid #a0a0a0;border-top:1px solid #a0a0a0;border-right:1px solid #fff;border-bottom:1px solid #fff"></div>
<div class="t" style="left:1231px;top:984px;color:#000;font-size:11.5px;letter-spacing:-0.3px">enabled</div>
<div style="left:1325px;top:981px;width:93px;height:19px;border-left:1px solid #a0a0a0;border-top:1px solid #a0a0a0;border-right:1px solid #fff;border-bottom:1px solid #fff"></div>
<div class="t" style="left:1327px;top:984px;color:#000;font-size:11.5px;letter-spacing:-0.3px">running</div>
<div style="left:1422px;top:981px;width:94px;height:19px;border-left:1px solid #a0a0a0;border-top:1px solid #a0a0a0;border-right:1px solid #fff;border-bottom:1px solid #fff"></div>
<div class="t" style="left:1424px;top:984px;color:#a8a8a8;font-size:11.5px;letter-spacing:-0.3px">slave</div>
<div style="left:1519px;top:981px;width:115px;height:19px;border-left:1px solid #a0a0a0;border-top:1px solid #a0a0a0;border-right:1px solid #fff;border-bottom:1px solid #fff"></div>
<div class="t" style="left:1521px;top:984px;color:#000;font-size:11.5px;letter-spacing:-0.3px">Status: connected</div>
<div style="left:0px;top:1040px;width:1920px;height:40px;background:linear-gradient(90deg,#0b1218 0px,#0e161e 428px,#586e82 432px,#5e778c 560px,#66809a 800px,#6a849c 1300px,#6a8298 1650px,#5a7084 1720px,#2a3644 1770px,#16202a 1800px,#121c26 1920px)"></div>
<svg style="position:absolute;left:0;top:1040px" width="1000" height="40"><defs><filter id="wb" x="-10%" y="-50%" width="120%" height="200%"><feGaussianBlur stdDeviation="2.5"/></filter></defs><path d="M400 17 Q560 25 740 42 L400 42 Z" fill="#0c141c" filter="url(#wb)"/></svg>
<div style="left:0px;top:1040px;width:1920px;height:1px;background:#2a3038"></div>
<div style="left:0px;top:1041px;width:1920px;height:1px;background:#6a7a88"></div>
<svg style="position:absolute;left:6px;top:1040px" width="44" height="40"><defs><radialGradient id="orb" cx="50%" cy="40%" r="60%"><stop offset="0" stop-color="#8ac8f0"/><stop offset="0.55" stop-color="#2a78c0"/><stop offset="0.85" stop-color="#0c3c78"/><stop offset="1" stop-color="#6ab0e0"/></radialGradient></defs><circle cx="21" cy="20" r="18.5" fill="url(#orb)" stroke="#9cc8e8" stroke-width="1"/><path d="M12 12 Q16 10 20 12 L19 19 Q15 17 11 19 Z" fill="#f05a28"/><path d="M22 12 Q26 14 31 12 L30 19 Q26 21 21 19 Z" fill="#7cc040"/><path d="M11 21 Q15 19 19 21 L18 28 Q14 26 10 28 Z" fill="#2aa8e8"/><path d="M21 21 Q25 23 30 21 L29 28 Q25 30 20 28 Z" fill="#f8c020"/><ellipse cx="21" cy="11" rx="12" ry="6" fill="#fff" opacity="0.25"/></svg>
<svg style="position:absolute;left:70px;top:1042px" width="38" height="36"><defs><radialGradient id="ie" cx="45%" cy="40%" r="60%"><stop offset="0" stop-color="#8ae0ff"/><stop offset="0.6" stop-color="#2a9ae0"/><stop offset="1" stop-color="#1060b0"/></radialGradient></defs><circle cx="20" cy="20" r="11.5" fill="url(#ie)"/><ellipse cx="20.5" cy="18" rx="6" ry="4.5" fill="#0b1218"/><rect x="12" y="17.5" width="16" height="3" fill="#7ad8fa"/><path d="M14 23 H31 V27 H14 Z" fill="#0b1218"/><path d="M14 22 Q20 30 28 24" fill="none" stroke="#2a9ae0" stroke-width="3"/><path d="M8 30 Q2 33 4 27 Q10 15 26 6 Q34 2 35 6 Q36 9 31 14" fill="none" stroke="#e8b030" stroke-width="2.4"/></svg>
<svg style="position:absolute;left:134px;top:1045px" width="34" height="32"><rect x="3" y="3" width="27" height="10" rx="1" fill="#f6e6b0" stroke="#c8a860" stroke-width="0.8"/><rect x="4" y="1.5" width="5" height="3" fill="#2e9a2e"/><rect x="13" y="3" width="5" height="3" fill="#d03a2a"/><rect x="21" y="5" width="5" height="3" fill="#2a88d0"/><path d="M1 9 H31 V29 H1 Z" fill="#f6d67a" stroke="#c8a050" stroke-width="0.8"/><path d="M1 9 H31 V14 H1 Z" fill="#fbe8a8"/><path d="M6 30 V19 H27 V30 H22 V24 H11 V30 Z" fill="#8ccaf0" stroke="#4a98d0" stroke-width="0.8"/></svg>
<div style="left:184px;top:1041px;width:58px;height:37px;background:linear-gradient(160deg,#5a6470 0%,#2a3440 40%,#101820 60%,#2a3440 100%);border:1px solid #48505a;border-radius:3px"></div>
<div style="left:246px;top:1041px;width:58px;height:37px;background:linear-gradient(160deg,#5a6470 0%,#2a3440 40%,#101820 60%,#2a3440 100%);border:1px solid #48505a;border-radius:3px"></div>
<div style="left:308px;top:1041px;width:58px;height:37px;background:linear-gradient(160deg,#5a6470 0%,#2a3440 40%,#101820 60%,#2a3440 100%);border:1px solid #48505a;border-radius:3px"></div>
<div style="left:370px;top:1041px;width:58px;height:37px;background:linear-gradient(160deg,#d8dce0 0%,#b8bec4 40%,#8c949c 60%,#c0c4c8 100%);border:1px solid #c8ccd0;border-radius:3px"></div>
<svg style="position:absolute;left:197px;top:1044px" width="32" height="32"><circle cx="16" cy="16" r="15" fill="#db4437"/><path d="M16 16 L3 23.5 A15 15 0 0 0 23.5 29 Z" fill="#0f9d58"/><path d="M16 16 L23.5 29 A15 15 0 0 0 29.5 9.5 L16 9.5 Z" fill="#f4c20d"/><circle cx="16" cy="16" r="6.5" fill="#fff"/><circle cx="16" cy="16" r="5" fill="#4285f4"/></svg>
<svg style="position:absolute;left:258px;top:1044px" width="34" height="32"><ellipse cx="15" cy="19" rx="13" ry="10" fill="#c8e0f0" transform="rotate(-20 15 19)"/><circle cx="9" cy="17" r="2.5" fill="#e03030"/><circle cx="13" cy="11" r="2.2" fill="#40b040"/><circle cx="19" cy="9" r="2.2" fill="#f0c020"/><circle cx="13" cy="21" r="1.8" fill="#203040"/><path d="M30 2 L17 30" stroke="#e0a040" stroke-width="2.5"/><path d="M27 2 L31 1 L30 6 Z" fill="#c08040"/></svg>
<svg style="position:absolute;left:321px;top:1045px" width="32" height="32"><rect x="1" y="1" width="30" height="22" fill="#2a88d0" stroke="#1a5a98"/><circle cx="8" cy="9" r="4" fill="none" stroke="#c8e8f8" stroke-width="1.2"/><circle cx="10" cy="7" r="2" fill="#f0a020"/><rect x="17" y="5" width="10" height="4" fill="#9ad8f8"/><rect x="17" y="12" width="10" height="4" fill="#9ad8f8"/><ellipse cx="16" cy="27" rx="6" ry="4" fill="#d8d8d8"/></svg>
<svg style="position:absolute;left:384px;top:1045px" width="32" height="32"><circle cx="15.5" cy="15" r="14.5" fill="#2a6fc8" stroke="#1a3f80"/><path d="M9 5 Q10 20 26 22" fill="none" stroke="#fff" stroke-width="1.8"/><path d="M13 4 Q14 16 27 17" fill="none" stroke="#fff" stroke-width="1.5"/></svg>
<svg style="position:absolute;left:1733px;top:1063px" width="9" height="5" viewBox="0 0 9 5"><path d="M0 5 L4.5 0 L9 5 Z" fill="#fff"/></svg>
<svg style="position:absolute;left:1754px;top:1051px" width="18" height="20"><path d="M1.5 0 V19" stroke="#fff" stroke-width="1.2"/><path d="M2 1 H11 L9 5 L12 9 H2 Z" fill="#f0f0f0"/><circle cx="13" cy="13.5" r="4.5" fill="#d02020" stroke="#fff"/><path d="M11 11.5 L15 15.5 M15 11.5 L11 15.5" stroke="#fff" stroke-width="1.3"/></svg>
<svg style="position:absolute;left:1778px;top:1052px" width="18" height="18"><path d="M3 0 V8 M1 3 H5" stroke="#fff" stroke-width="1.2"/><rect x="5.5" y="4.5" width="11" height="8" fill="#101820" stroke="#fff"/><path d="M11 13 V16 M7 16.5 H15" stroke="#fff"/></svg>
<svg style="position:absolute;left:1802px;top:1052px" width="18" height="17"><path d="M1 6 H5 L10 1 V16 L5 11 H1 Z" fill="#f0f0f0"/><path d="M12 5 Q14 8.5 12 12 M14 3 Q17.5 8.5 14 14" fill="none" stroke="#f0f0f0" stroke-width="1.2"/></svg>
<div class="t" style="left:1836px;top:1046px;color:#fff;font-size:12px;letter-spacing:0;width:58px;text-align:center">20:16</div>
<div class="t" style="left:1833px;top:1063px;color:#fff;font-size:12px;letter-spacing:0;width:64px;text-align:center">03/01/2016</div>
<div style="left:1906px;top:1041px;width:14px;height:39px;background:linear-gradient(90deg,#3a4450,#5a6470);border-left:1px solid #8a949c"></div>
</body></html>
